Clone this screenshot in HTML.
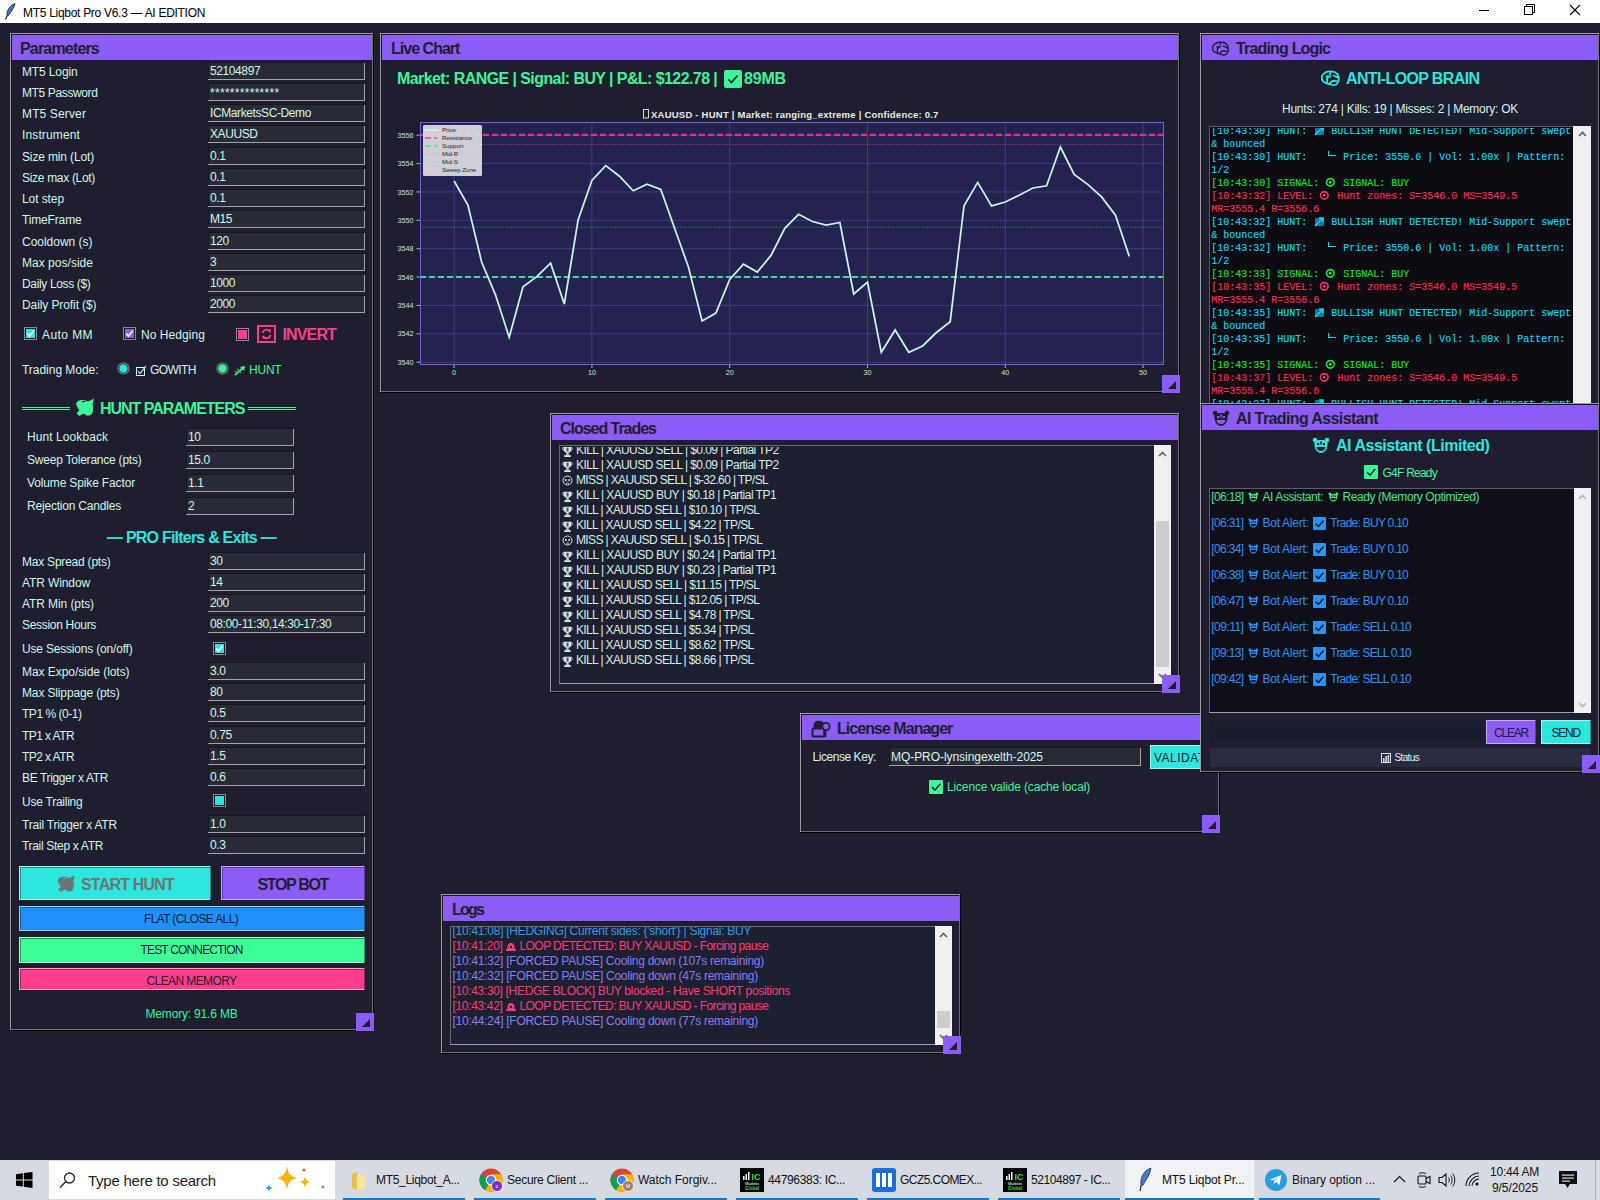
<!DOCTYPE html><html><head><meta charset="utf-8"><style>
html,body{margin:0;padding:0;}
body{width:1600px;height:1200px;position:relative;overflow:hidden;background:#1e1e2e;font-family:"Liberation Sans", sans-serif;}
.t{position:absolute;white-space:pre;}
.b{position:absolute;}
</style></head><body>
<div class="b" style="left:0px;top:0px;width:1600px;height:23px;background:#ffffff;"></div>
<div class="t" style="left:23px;top:6px;font-size:12px;line-height:14px;color:#000;letter-spacing:-0.292px;">MT5 Liqbot Pro V6.3 — AI EDITION</div>
<svg class="b" style="left:4px;top:3px" width="12" height="17"><path d="M11 0.5 C5 3 2.5 8 3 13 L4.5 12.5 C7 9 10 5 11 0.5 Z" fill="#4a78c8" stroke="#1a2a48" stroke-width="0.9"/><path d="M3 13 L1.5 16.5" stroke="#111" stroke-width="1.1"/></svg>
<svg class="b" style="left:1470px;top:0px" width="130" height="23"><path d="M9 10.5 L19 10.5" stroke="#000" stroke-width="1"/><rect x="54.5" y="6.5" width="8" height="8" fill="none" stroke="#000" stroke-width="1"/><path d="M56.5 6.5 L56.5 4.5 L64.5 4.5 L64.5 12.5 L62.5 12.5" fill="none" stroke="#000" stroke-width="1"/><path d="M100 5 L110 15 M110 5 L100 15" stroke="#000" stroke-width="1.1"/></svg>
<div class="b" style="left:10px;top:33px;width:364px;height:998px;background:#1e1e2e;"></div>
<div class="b" style="left:10px;top:33px;width:364px;height:1px;background:#9a9aa2;"></div>
<div class="b" style="left:10px;top:33px;width:1px;height:998px;background:#9a9aa2;"></div>
<div class="b" style="left:11px;top:34px;width:362px;height:1px;background:#18181f;"></div>
<div class="b" style="left:11px;top:34px;width:1px;height:996px;background:#18181f;"></div>
<div class="b" style="left:372px;top:34px;width:1px;height:996px;background:#6f6f78;"></div>
<div class="b" style="left:11px;top:1029px;width:362px;height:1px;background:#6f6f78;"></div>
<div class="b" style="left:373px;top:33px;width:1px;height:998px;background:#000;"></div>
<div class="b" style="left:10px;top:1030px;width:364px;height:1px;background:#000;"></div>
<div class="b" style="left:12px;top:35px;width:360px;height:25px;background:#8b5cf6;"></div>
<div class="t" style="left:20px;top:40px;font-size:16px;line-height:17px;color:#1e1e2e;font-weight:bold;letter-spacing:-0.823px;">Parameters</div>
<div class="t" style="left:22px;top:65px;font-size:12px;line-height:14px;color:#d2f6ea;letter-spacing:-0.132px;">MT5 Login</div>
<div class="b" style="left:208px;top:62px;width:157px;height:18px;background:#282a35;"></div>
<div class="b" style="left:208px;top:62px;width:157px;height:1px;background:#16161d;"></div>
<div class="b" style="left:208px;top:62px;width:1px;height:18px;background:#16161d;"></div>
<div class="b" style="left:208px;top:79px;width:157px;height:1px;background:#a3a3a8;"></div>
<div class="b" style="left:364px;top:63px;width:1px;height:17px;background:#a3a3a8;"></div>
<div class="t" style="left:210px;top:64px;font-size:12px;line-height:14px;color:#d2f6ea;letter-spacing:-0.4px;">52104897</div>
<div class="t" style="left:22px;top:86px;font-size:12px;line-height:14px;color:#d2f6ea;letter-spacing:-0.376px;">MT5 Password</div>
<div class="b" style="left:208px;top:83px;width:157px;height:18px;background:#282a35;"></div>
<div class="b" style="left:208px;top:83px;width:157px;height:1px;background:#16161d;"></div>
<div class="b" style="left:208px;top:83px;width:1px;height:18px;background:#16161d;"></div>
<div class="b" style="left:208px;top:100px;width:157px;height:1px;background:#a3a3a8;"></div>
<div class="b" style="left:364px;top:84px;width:1px;height:17px;background:#a3a3a8;"></div>
<div class="t" style="left:22px;top:107px;font-size:12px;line-height:14px;color:#d2f6ea;letter-spacing:0.133px;">MT5 Server</div>
<div class="b" style="left:208px;top:104px;width:157px;height:18px;background:#282a35;"></div>
<div class="b" style="left:208px;top:104px;width:157px;height:1px;background:#16161d;"></div>
<div class="b" style="left:208px;top:104px;width:1px;height:18px;background:#16161d;"></div>
<div class="b" style="left:208px;top:121px;width:157px;height:1px;background:#a3a3a8;"></div>
<div class="b" style="left:364px;top:105px;width:1px;height:17px;background:#a3a3a8;"></div>
<div class="t" style="left:210px;top:106px;font-size:12px;line-height:14px;color:#d2f6ea;letter-spacing:-0.4px;">ICMarketsSC-Demo</div>
<div class="t" style="left:22px;top:128px;font-size:12px;line-height:14px;color:#d2f6ea;letter-spacing:0.133px;">Instrument</div>
<div class="b" style="left:208px;top:125px;width:157px;height:18px;background:#282a35;"></div>
<div class="b" style="left:208px;top:125px;width:157px;height:1px;background:#16161d;"></div>
<div class="b" style="left:208px;top:125px;width:1px;height:18px;background:#16161d;"></div>
<div class="b" style="left:208px;top:142px;width:157px;height:1px;background:#a3a3a8;"></div>
<div class="b" style="left:364px;top:126px;width:1px;height:17px;background:#a3a3a8;"></div>
<div class="t" style="left:210px;top:127px;font-size:12px;line-height:14px;color:#d2f6ea;letter-spacing:-0.4px;">XAUUSD</div>
<div class="t" style="left:22px;top:150px;font-size:12px;line-height:14px;color:#d2f6ea;letter-spacing:-0.144px;">Size min (Lot)</div>
<div class="b" style="left:208px;top:147px;width:157px;height:18px;background:#282a35;"></div>
<div class="b" style="left:208px;top:147px;width:157px;height:1px;background:#16161d;"></div>
<div class="b" style="left:208px;top:147px;width:1px;height:18px;background:#16161d;"></div>
<div class="b" style="left:208px;top:164px;width:157px;height:1px;background:#a3a3a8;"></div>
<div class="b" style="left:364px;top:148px;width:1px;height:17px;background:#a3a3a8;"></div>
<div class="t" style="left:210px;top:149px;font-size:12px;line-height:14px;color:#d2f6ea;letter-spacing:-0.4px;">0.1</div>
<div class="t" style="left:22px;top:171px;font-size:12px;line-height:14px;color:#d2f6ea;letter-spacing:-0.31px;">Size max (Lot)</div>
<div class="b" style="left:208px;top:168px;width:157px;height:18px;background:#282a35;"></div>
<div class="b" style="left:208px;top:168px;width:157px;height:1px;background:#16161d;"></div>
<div class="b" style="left:208px;top:168px;width:1px;height:18px;background:#16161d;"></div>
<div class="b" style="left:208px;top:185px;width:157px;height:1px;background:#a3a3a8;"></div>
<div class="b" style="left:364px;top:169px;width:1px;height:17px;background:#a3a3a8;"></div>
<div class="t" style="left:210px;top:170px;font-size:12px;line-height:14px;color:#d2f6ea;letter-spacing:-0.4px;">0.1</div>
<div class="t" style="left:22px;top:192px;font-size:12px;line-height:14px;color:#d2f6ea;letter-spacing:-0.084px;">Lot step</div>
<div class="b" style="left:208px;top:189px;width:157px;height:18px;background:#282a35;"></div>
<div class="b" style="left:208px;top:189px;width:157px;height:1px;background:#16161d;"></div>
<div class="b" style="left:208px;top:189px;width:1px;height:18px;background:#16161d;"></div>
<div class="b" style="left:208px;top:206px;width:157px;height:1px;background:#a3a3a8;"></div>
<div class="b" style="left:364px;top:190px;width:1px;height:17px;background:#a3a3a8;"></div>
<div class="t" style="left:210px;top:191px;font-size:12px;line-height:14px;color:#d2f6ea;letter-spacing:-0.4px;">0.1</div>
<div class="t" style="left:22px;top:213px;font-size:12px;line-height:14px;color:#d2f6ea;letter-spacing:-0.156px;">TimeFrame</div>
<div class="b" style="left:208px;top:210px;width:157px;height:18px;background:#282a35;"></div>
<div class="b" style="left:208px;top:210px;width:157px;height:1px;background:#16161d;"></div>
<div class="b" style="left:208px;top:210px;width:1px;height:18px;background:#16161d;"></div>
<div class="b" style="left:208px;top:227px;width:157px;height:1px;background:#a3a3a8;"></div>
<div class="b" style="left:364px;top:211px;width:1px;height:17px;background:#a3a3a8;"></div>
<div class="t" style="left:210px;top:212px;font-size:12px;line-height:14px;color:#d2f6ea;letter-spacing:-0.4px;">M15</div>
<div class="t" style="left:22px;top:235px;font-size:12px;line-height:14px;color:#d2f6ea;letter-spacing:-0.017px;">Cooldown (s)</div>
<div class="b" style="left:208px;top:232px;width:157px;height:18px;background:#282a35;"></div>
<div class="b" style="left:208px;top:232px;width:157px;height:1px;background:#16161d;"></div>
<div class="b" style="left:208px;top:232px;width:1px;height:18px;background:#16161d;"></div>
<div class="b" style="left:208px;top:249px;width:157px;height:1px;background:#a3a3a8;"></div>
<div class="b" style="left:364px;top:233px;width:1px;height:17px;background:#a3a3a8;"></div>
<div class="t" style="left:210px;top:234px;font-size:12px;line-height:14px;color:#d2f6ea;letter-spacing:-0.4px;">120</div>
<div class="t" style="left:22px;top:256px;font-size:12px;line-height:14px;color:#d2f6ea;letter-spacing:0.026px;">Max pos/side</div>
<div class="b" style="left:208px;top:253px;width:157px;height:18px;background:#282a35;"></div>
<div class="b" style="left:208px;top:253px;width:157px;height:1px;background:#16161d;"></div>
<div class="b" style="left:208px;top:253px;width:1px;height:18px;background:#16161d;"></div>
<div class="b" style="left:208px;top:270px;width:157px;height:1px;background:#a3a3a8;"></div>
<div class="b" style="left:364px;top:254px;width:1px;height:17px;background:#a3a3a8;"></div>
<div class="t" style="left:210px;top:255px;font-size:12px;line-height:14px;color:#d2f6ea;letter-spacing:-0.4px;">3</div>
<div class="t" style="left:22px;top:277px;font-size:12px;line-height:14px;color:#d2f6ea;letter-spacing:-0.347px;">Daily Loss ($)</div>
<div class="b" style="left:208px;top:274px;width:157px;height:18px;background:#282a35;"></div>
<div class="b" style="left:208px;top:274px;width:157px;height:1px;background:#16161d;"></div>
<div class="b" style="left:208px;top:274px;width:1px;height:18px;background:#16161d;"></div>
<div class="b" style="left:208px;top:291px;width:157px;height:1px;background:#a3a3a8;"></div>
<div class="b" style="left:364px;top:275px;width:1px;height:17px;background:#a3a3a8;"></div>
<div class="t" style="left:210px;top:276px;font-size:12px;line-height:14px;color:#d2f6ea;letter-spacing:-0.4px;">1000</div>
<div class="t" style="left:22px;top:298px;font-size:12px;line-height:14px;color:#d2f6ea;letter-spacing:-0.095px;">Daily Profit ($)</div>
<div class="b" style="left:208px;top:295px;width:157px;height:18px;background:#282a35;"></div>
<div class="b" style="left:208px;top:295px;width:157px;height:1px;background:#16161d;"></div>
<div class="b" style="left:208px;top:295px;width:1px;height:18px;background:#16161d;"></div>
<div class="b" style="left:208px;top:312px;width:157px;height:1px;background:#a3a3a8;"></div>
<div class="b" style="left:364px;top:296px;width:1px;height:17px;background:#a3a3a8;"></div>
<div class="t" style="left:210px;top:297px;font-size:12px;line-height:14px;color:#d2f6ea;letter-spacing:-0.4px;">2000</div>
<div class="t" style="left:210px;top:86px;font-size:12px;line-height:14px;color:#d2f6ea;letter-spacing:0.292px;">**************</div>
<svg class="b" style="left:24px;top:327px" width="13" height="13"><rect x="0.5" y="0.5" width="12" height="12" fill="#1a1a24" stroke="#8a8a90"/><rect x="2" y="2" width="9" height="9" fill="#2ee6de"/><path d="M3.2 6.5 L5.5 9 L9.8 3.8" stroke="#e8fff8" stroke-width="1.7" fill="none"/></svg>
<div class="t" style="left:42px;top:328px;font-size:12px;line-height:14px;color:#d2f6ea;letter-spacing:0.429px;">Auto MM</div>
<svg class="b" style="left:123px;top:327px" width="13" height="13"><rect x="0.5" y="0.5" width="12" height="12" fill="#1a1a24" stroke="#8a8a90"/><rect x="2" y="2" width="9" height="9" fill="#8b5cf6"/><path d="M3.2 6.5 L5.5 9 L9.8 3.8" stroke="#e8fff8" stroke-width="1.7" fill="none"/></svg>
<div class="t" style="left:141px;top:328px;font-size:12px;line-height:14px;color:#d2f6ea;letter-spacing:0.062px;">No Hedging</div>
<svg class="b" style="left:236px;top:328px" width="13" height="13"><rect x="0.5" y="0.5" width="12" height="12" fill="#1a1a24" stroke="#8a8a90"/><rect x="2" y="2" width="9" height="9" fill="#ff3d8b"/></svg>
<svg class="b" style="left:257px;top:325px" width="19" height="18"><rect x="1" y="1" width="17" height="16" fill="none" stroke="#ff3d8b" stroke-width="2"/><path d="M5.5 8 A4 4 0 0 1 13 7" stroke="#ff3d8b" stroke-width="1.8" fill="none"/><path d="M13.5 10 A4 4 0 0 1 6 11" stroke="#ff3d8b" stroke-width="1.8" fill="none"/><path d="M11 5.5 L14 7.5 L13.5 4" fill="#ff3d8b"/><path d="M8 12.5 L5 10.5 L5.5 14" fill="#ff3d8b"/></svg>
<div class="t" style="left:282.5px;top:326px;font-size:16px;line-height:17px;color:#ff3d8b;font-weight:bold;letter-spacing:-0.867px;">INVERT</div>
<div class="t" style="left:22px;top:363px;font-size:12px;line-height:14px;color:#d2f6ea;letter-spacing:-0.032px;">Trading Mode:</div>
<svg class="b" style="left:117px;top:362px" width="13" height="13"><circle cx="6.5" cy="6.5" r="6" fill="#8a8a90"/><circle cx="6.5" cy="6.5" r="5" fill="#1a1a24"/><circle cx="6.5" cy="6.5" r="4.2" fill="#2ee6de"/></svg>
<svg class="b" style="left:136px;top:365px" width="11" height="11"><rect x="0.5" y="2.5" width="8" height="8" fill="none" stroke="#d2f6ea" stroke-width="1"/><path d="M2 6 L4 8.5 L10 1" stroke="#d2f6ea" stroke-width="1.2" fill="none"/></svg>
<div class="t" style="left:150px;top:363px;font-size:12px;line-height:14px;color:#d2f6ea;letter-spacing:-0.594px;">GOWITH</div>
<svg class="b" style="left:216px;top:362px" width="13" height="13"><circle cx="6.5" cy="6.5" r="6" fill="#8a8a90"/><circle cx="6.5" cy="6.5" r="5" fill="#1a1a24"/><circle cx="6.5" cy="6.5" r="4.2" fill="#3ef59a"/></svg>
<svg class="b" style="left:234px;top:365px" width="12" height="11"><path d="M1 10 L10 2" stroke="#3ef59a" stroke-width="2"/><path d="M6 2 L11 1 L10 6 Z" fill="#3ef59a"/><path d="M1 6 L4 9 M3 4 L7 8" stroke="#2aa86a" stroke-width="1.5"/></svg>
<div class="t" style="left:249px;top:363px;font-size:12px;line-height:14px;color:#3ef59a;letter-spacing:-0.211px;">HUNT</div>
<div class="b" style="left:22px;top:407px;width:48px;height:1px;background:#3ef59a;"></div>
<div class="b" style="left:22px;top:409px;width:48px;height:1px;background:#3ef59a;"></div>
<div class="b" style="left:248px;top:407px;width:48px;height:1px;background:#3ef59a;"></div>
<div class="b" style="left:248px;top:409px;width:48px;height:1px;background:#3ef59a;"></div>
<svg class="b" style="left:70px;top:394px" width="26.0" height="24.0" viewBox="0 0 26 24"><path d="M6 10 C6.5 7.5 9 6 12 6 C14 6 16 6.5 17.5 7.5 L24 4.8 L22.5 10.5 C23.5 13 23.5 17 22 19.5 C20.5 21.5 18.5 22 17 21.5 L13.5 19.5 L9.5 22 L6.5 19.5 L9.5 16 L8 14.5 Z" fill="#3ef59a"/><ellipse cx="13.5" cy="7.6" rx="2" ry="0.6" fill="#1e1e2e"/></svg>
<div class="t" style="left:100px;top:400px;font-size:16px;line-height:17px;color:#3ef59a;font-weight:bold;letter-spacing:-1.019px;">HUNT PARAMETERS</div>
<div class="t" style="left:27px;top:430px;font-size:12px;line-height:14px;color:#d2f6ea;letter-spacing:0.075px;">Hunt Lookback</div>
<div class="b" style="left:186px;top:428px;width:108px;height:18px;background:#282a35;"></div>
<div class="b" style="left:186px;top:428px;width:108px;height:1px;background:#16161d;"></div>
<div class="b" style="left:186px;top:428px;width:1px;height:18px;background:#16161d;"></div>
<div class="b" style="left:186px;top:445px;width:108px;height:1px;background:#a3a3a8;"></div>
<div class="b" style="left:293px;top:429px;width:1px;height:17px;background:#a3a3a8;"></div>
<div class="t" style="left:188px;top:430px;font-size:12px;line-height:14px;color:#d2f6ea;letter-spacing:-0.4px;">10</div>
<div class="t" style="left:27px;top:453px;font-size:12px;line-height:14px;color:#d2f6ea;letter-spacing:-0.222px;">Sweep Tolerance (pts)</div>
<div class="b" style="left:186px;top:451px;width:108px;height:18px;background:#282a35;"></div>
<div class="b" style="left:186px;top:451px;width:108px;height:1px;background:#16161d;"></div>
<div class="b" style="left:186px;top:451px;width:1px;height:18px;background:#16161d;"></div>
<div class="b" style="left:186px;top:468px;width:108px;height:1px;background:#a3a3a8;"></div>
<div class="b" style="left:293px;top:452px;width:1px;height:17px;background:#a3a3a8;"></div>
<div class="t" style="left:188px;top:453px;font-size:12px;line-height:14px;color:#d2f6ea;letter-spacing:-0.4px;">15.0</div>
<div class="t" style="left:27px;top:476px;font-size:12px;line-height:14px;color:#d2f6ea;letter-spacing:-0.142px;">Volume Spike Factor</div>
<div class="b" style="left:186px;top:474px;width:108px;height:18px;background:#282a35;"></div>
<div class="b" style="left:186px;top:474px;width:108px;height:1px;background:#16161d;"></div>
<div class="b" style="left:186px;top:474px;width:1px;height:18px;background:#16161d;"></div>
<div class="b" style="left:186px;top:491px;width:108px;height:1px;background:#a3a3a8;"></div>
<div class="b" style="left:293px;top:475px;width:1px;height:17px;background:#a3a3a8;"></div>
<div class="t" style="left:188px;top:476px;font-size:12px;line-height:14px;color:#d2f6ea;letter-spacing:-0.4px;">1.1</div>
<div class="t" style="left:27px;top:499px;font-size:12px;line-height:14px;color:#d2f6ea;letter-spacing:-0.199px;">Rejection Candles</div>
<div class="b" style="left:186px;top:497px;width:108px;height:18px;background:#282a35;"></div>
<div class="b" style="left:186px;top:497px;width:108px;height:1px;background:#16161d;"></div>
<div class="b" style="left:186px;top:497px;width:1px;height:18px;background:#16161d;"></div>
<div class="b" style="left:186px;top:514px;width:108px;height:1px;background:#a3a3a8;"></div>
<div class="b" style="left:293px;top:498px;width:1px;height:17px;background:#a3a3a8;"></div>
<div class="t" style="left:188px;top:499px;font-size:12px;line-height:14px;color:#d2f6ea;letter-spacing:-0.4px;">2</div>
<div class="t" style="left:107px;top:529px;font-size:16px;line-height:17px;color:#2ee6de;font-weight:bold;letter-spacing:-0.776px;">— PRO Filters &amp; Exits —</div>
<div class="t" style="left:22px;top:555px;font-size:12px;line-height:14px;color:#d2f6ea;letter-spacing:-0.22px;">Max Spread (pts)</div>
<div class="b" style="left:208px;top:552px;width:157px;height:18px;background:#282a35;"></div>
<div class="b" style="left:208px;top:552px;width:157px;height:1px;background:#16161d;"></div>
<div class="b" style="left:208px;top:552px;width:1px;height:18px;background:#16161d;"></div>
<div class="b" style="left:208px;top:569px;width:157px;height:1px;background:#a3a3a8;"></div>
<div class="b" style="left:364px;top:553px;width:1px;height:17px;background:#a3a3a8;"></div>
<div class="t" style="left:210px;top:554px;font-size:12px;line-height:14px;color:#d2f6ea;letter-spacing:-0.4px;">30</div>
<div class="t" style="left:22px;top:576px;font-size:12px;line-height:14px;color:#d2f6ea;letter-spacing:-0.113px;">ATR Window</div>
<div class="b" style="left:208px;top:573px;width:157px;height:18px;background:#282a35;"></div>
<div class="b" style="left:208px;top:573px;width:157px;height:1px;background:#16161d;"></div>
<div class="b" style="left:208px;top:573px;width:1px;height:18px;background:#16161d;"></div>
<div class="b" style="left:208px;top:590px;width:157px;height:1px;background:#a3a3a8;"></div>
<div class="b" style="left:364px;top:574px;width:1px;height:17px;background:#a3a3a8;"></div>
<div class="t" style="left:210px;top:575px;font-size:12px;line-height:14px;color:#d2f6ea;letter-spacing:-0.4px;">14</div>
<div class="t" style="left:22px;top:597px;font-size:12px;line-height:14px;color:#d2f6ea;letter-spacing:-0.085px;">ATR Min (pts)</div>
<div class="b" style="left:208px;top:594px;width:157px;height:18px;background:#282a35;"></div>
<div class="b" style="left:208px;top:594px;width:157px;height:1px;background:#16161d;"></div>
<div class="b" style="left:208px;top:594px;width:1px;height:18px;background:#16161d;"></div>
<div class="b" style="left:208px;top:611px;width:157px;height:1px;background:#a3a3a8;"></div>
<div class="b" style="left:364px;top:595px;width:1px;height:17px;background:#a3a3a8;"></div>
<div class="t" style="left:210px;top:596px;font-size:12px;line-height:14px;color:#d2f6ea;letter-spacing:-0.4px;">200</div>
<div class="t" style="left:22px;top:618px;font-size:12px;line-height:14px;color:#d2f6ea;letter-spacing:-0.31px;">Session Hours</div>
<div class="b" style="left:208px;top:615px;width:157px;height:18px;background:#282a35;"></div>
<div class="b" style="left:208px;top:615px;width:157px;height:1px;background:#16161d;"></div>
<div class="b" style="left:208px;top:615px;width:1px;height:18px;background:#16161d;"></div>
<div class="b" style="left:208px;top:632px;width:157px;height:1px;background:#a3a3a8;"></div>
<div class="b" style="left:364px;top:616px;width:1px;height:17px;background:#a3a3a8;"></div>
<div class="t" style="left:210px;top:617px;font-size:12px;line-height:14px;color:#d2f6ea;letter-spacing:-0.4px;">08:00-11:30,14:30-17:30</div>
<div class="t" style="left:22px;top:665px;font-size:12px;line-height:14px;color:#d2f6ea;letter-spacing:-0.059px;">Max Expo/side (lots)</div>
<div class="b" style="left:208px;top:662px;width:157px;height:18px;background:#282a35;"></div>
<div class="b" style="left:208px;top:662px;width:157px;height:1px;background:#16161d;"></div>
<div class="b" style="left:208px;top:662px;width:1px;height:18px;background:#16161d;"></div>
<div class="b" style="left:208px;top:679px;width:157px;height:1px;background:#a3a3a8;"></div>
<div class="b" style="left:364px;top:663px;width:1px;height:17px;background:#a3a3a8;"></div>
<div class="t" style="left:210px;top:664px;font-size:12px;line-height:14px;color:#d2f6ea;letter-spacing:-0.4px;">3.0</div>
<div class="t" style="left:22px;top:686px;font-size:12px;line-height:14px;color:#d2f6ea;letter-spacing:-0.141px;">Max Slippage (pts)</div>
<div class="b" style="left:208px;top:683px;width:157px;height:18px;background:#282a35;"></div>
<div class="b" style="left:208px;top:683px;width:157px;height:1px;background:#16161d;"></div>
<div class="b" style="left:208px;top:683px;width:1px;height:18px;background:#16161d;"></div>
<div class="b" style="left:208px;top:700px;width:157px;height:1px;background:#a3a3a8;"></div>
<div class="b" style="left:364px;top:684px;width:1px;height:17px;background:#a3a3a8;"></div>
<div class="t" style="left:210px;top:685px;font-size:12px;line-height:14px;color:#d2f6ea;letter-spacing:-0.4px;">80</div>
<div class="t" style="left:22px;top:707px;font-size:12px;line-height:14px;color:#d2f6ea;letter-spacing:-0.47px;">TP1 % (0-1)</div>
<div class="b" style="left:208px;top:704px;width:157px;height:18px;background:#282a35;"></div>
<div class="b" style="left:208px;top:704px;width:157px;height:1px;background:#16161d;"></div>
<div class="b" style="left:208px;top:704px;width:1px;height:18px;background:#16161d;"></div>
<div class="b" style="left:208px;top:721px;width:157px;height:1px;background:#a3a3a8;"></div>
<div class="b" style="left:364px;top:705px;width:1px;height:17px;background:#a3a3a8;"></div>
<div class="t" style="left:210px;top:706px;font-size:12px;line-height:14px;color:#d2f6ea;letter-spacing:-0.4px;">0.5</div>
<div class="t" style="left:22px;top:729px;font-size:12px;line-height:14px;color:#d2f6ea;letter-spacing:-0.568px;">TP1 x ATR</div>
<div class="b" style="left:208px;top:726px;width:157px;height:18px;background:#282a35;"></div>
<div class="b" style="left:208px;top:726px;width:157px;height:1px;background:#16161d;"></div>
<div class="b" style="left:208px;top:726px;width:1px;height:18px;background:#16161d;"></div>
<div class="b" style="left:208px;top:743px;width:157px;height:1px;background:#a3a3a8;"></div>
<div class="b" style="left:364px;top:727px;width:1px;height:17px;background:#a3a3a8;"></div>
<div class="t" style="left:210px;top:728px;font-size:12px;line-height:14px;color:#d2f6ea;letter-spacing:-0.4px;">0.75</div>
<div class="t" style="left:22px;top:750px;font-size:12px;line-height:14px;color:#d2f6ea;letter-spacing:-0.568px;">TP2 x ATR</div>
<div class="b" style="left:208px;top:747px;width:157px;height:18px;background:#282a35;"></div>
<div class="b" style="left:208px;top:747px;width:157px;height:1px;background:#16161d;"></div>
<div class="b" style="left:208px;top:747px;width:1px;height:18px;background:#16161d;"></div>
<div class="b" style="left:208px;top:764px;width:157px;height:1px;background:#a3a3a8;"></div>
<div class="b" style="left:364px;top:748px;width:1px;height:17px;background:#a3a3a8;"></div>
<div class="t" style="left:210px;top:749px;font-size:12px;line-height:14px;color:#d2f6ea;letter-spacing:-0.4px;">1.5</div>
<div class="t" style="left:22px;top:771px;font-size:12px;line-height:14px;color:#d2f6ea;letter-spacing:-0.362px;">BE Trigger x ATR</div>
<div class="b" style="left:208px;top:768px;width:157px;height:18px;background:#282a35;"></div>
<div class="b" style="left:208px;top:768px;width:157px;height:1px;background:#16161d;"></div>
<div class="b" style="left:208px;top:768px;width:1px;height:18px;background:#16161d;"></div>
<div class="b" style="left:208px;top:785px;width:157px;height:1px;background:#a3a3a8;"></div>
<div class="b" style="left:364px;top:769px;width:1px;height:17px;background:#a3a3a8;"></div>
<div class="t" style="left:210px;top:770px;font-size:12px;line-height:14px;color:#d2f6ea;letter-spacing:-0.4px;">0.6</div>
<div class="t" style="left:22px;top:818px;font-size:12px;line-height:14px;color:#d2f6ea;letter-spacing:-0.195px;">Trail Trigger x ATR</div>
<div class="b" style="left:208px;top:815px;width:157px;height:18px;background:#282a35;"></div>
<div class="b" style="left:208px;top:815px;width:157px;height:1px;background:#16161d;"></div>
<div class="b" style="left:208px;top:815px;width:1px;height:18px;background:#16161d;"></div>
<div class="b" style="left:208px;top:832px;width:157px;height:1px;background:#a3a3a8;"></div>
<div class="b" style="left:364px;top:816px;width:1px;height:17px;background:#a3a3a8;"></div>
<div class="t" style="left:210px;top:817px;font-size:12px;line-height:14px;color:#d2f6ea;letter-spacing:-0.4px;">1.0</div>
<div class="t" style="left:22px;top:839px;font-size:12px;line-height:14px;color:#d2f6ea;letter-spacing:-0.313px;">Trail Step x ATR</div>
<div class="b" style="left:208px;top:836px;width:157px;height:18px;background:#282a35;"></div>
<div class="b" style="left:208px;top:836px;width:157px;height:1px;background:#16161d;"></div>
<div class="b" style="left:208px;top:836px;width:1px;height:18px;background:#16161d;"></div>
<div class="b" style="left:208px;top:853px;width:157px;height:1px;background:#a3a3a8;"></div>
<div class="b" style="left:364px;top:837px;width:1px;height:17px;background:#a3a3a8;"></div>
<div class="t" style="left:210px;top:838px;font-size:12px;line-height:14px;color:#d2f6ea;letter-spacing:-0.4px;">0.3</div>
<div class="t" style="left:22px;top:642px;font-size:12px;line-height:14px;color:#d2f6ea;letter-spacing:-0.189px;">Use Sessions (on/off)</div>
<svg class="b" style="left:213px;top:642px" width="13" height="13"><rect x="0.5" y="0.5" width="12" height="12" fill="#1a1a24" stroke="#8a8a90"/><rect x="2" y="2" width="9" height="9" fill="#2ee6de"/><path d="M3.2 6.5 L5.5 9 L9.8 3.8" stroke="#e8fff8" stroke-width="1.7" fill="none"/></svg>
<div class="t" style="left:22px;top:795px;font-size:12px;line-height:14px;color:#d2f6ea;letter-spacing:-0.24px;">Use Trailing</div>
<svg class="b" style="left:213px;top:794px" width="13" height="13"><rect x="0.5" y="0.5" width="12" height="12" fill="#1a1a24" stroke="#8a8a90"/><rect x="2" y="2" width="9" height="9" fill="#2ee6de"/></svg>
<div class="b" style="left:19px;top:866px;width:192px;height:34px;background:#2ee6de;"></div>
<div class="b" style="left:19px;top:866px;width:192px;height:1px;background:#9ff7f2;"></div>
<div class="b" style="left:19px;top:866px;width:1px;height:34px;background:#9ff7f2;"></div>
<div class="b" style="left:20px;top:867px;width:190px;height:1px;background:#1a8f8a;"></div>
<div class="b" style="left:20px;top:867px;width:1px;height:32px;background:#1a8f8a;"></div>
<div class="b" style="left:19px;top:899px;width:192px;height:1px;background:#9ff7f2;"></div>
<div class="b" style="left:210px;top:866px;width:1px;height:34px;background:#1a8f8a;"></div>
<svg class="b" style="left:52px;top:871px" width="24.7" height="22.8" viewBox="0 0 26 24"><path d="M6 10 C6.5 7.5 9 6 12 6 C14 6 16 6.5 17.5 7.5 L24 4.8 L22.5 10.5 C23.5 13 23.5 17 22 19.5 C20.5 21.5 18.5 22 17 21.5 L13.5 19.5 L9.5 22 L6.5 19.5 L9.5 16 L8 14.5 Z" fill="#6e7474"/><ellipse cx="13.5" cy="7.6" rx="2" ry="0.6" fill="#2ee6de"/></svg>
<div class="t" style="left:81px;top:876px;font-size:16px;line-height:17px;color:#6e7474;font-weight:bold;letter-spacing:-0.809px;">START HUNT</div>
<div class="b" style="left:221px;top:866px;width:144px;height:34px;background:#8b5cf6;"></div>
<div class="b" style="left:221px;top:866px;width:144px;height:1px;background:#c3a9ff;"></div>
<div class="b" style="left:221px;top:866px;width:1px;height:34px;background:#c3a9ff;"></div>
<div class="b" style="left:222px;top:867px;width:142px;height:1px;background:#5a3aa8;"></div>
<div class="b" style="left:222px;top:867px;width:1px;height:32px;background:#5a3aa8;"></div>
<div class="b" style="left:221px;top:899px;width:144px;height:1px;background:#c3a9ff;"></div>
<div class="b" style="left:364px;top:866px;width:1px;height:34px;background:#5a3aa8;"></div>
<div class="t" style="left:257.5px;top:876px;font-size:16px;line-height:17px;color:#1e1e2e;font-weight:bold;letter-spacing:-1.346px;">STOP BOT</div>
<div class="b" style="left:19px;top:906px;width:346px;height:25px;background:#1e90ff;"></div>
<div class="b" style="left:19px;top:906px;width:346px;height:1px;background:#9ccfff;"></div>
<div class="b" style="left:19px;top:906px;width:1px;height:25px;background:#9ccfff;"></div>
<div class="b" style="left:20px;top:907px;width:344px;height:1px;background:#145a9e;"></div>
<div class="b" style="left:20px;top:907px;width:1px;height:23px;background:#145a9e;"></div>
<div class="b" style="left:19px;top:930px;width:346px;height:1px;background:#9ccfff;"></div>
<div class="b" style="left:364px;top:906px;width:1px;height:25px;background:#145a9e;"></div>
<div class="t" style="left:144px;top:912px;font-size:12px;line-height:14px;color:#1e1e2e;letter-spacing:-0.64px;">FLAT (CLOSE ALL)</div>
<div class="b" style="left:19px;top:937px;width:346px;height:26px;background:#3dff98;"></div>
<div class="b" style="left:19px;top:937px;width:346px;height:1px;background:#a8ffd0;"></div>
<div class="b" style="left:19px;top:937px;width:1px;height:26px;background:#a8ffd0;"></div>
<div class="b" style="left:20px;top:938px;width:344px;height:1px;background:#22915a;"></div>
<div class="b" style="left:20px;top:938px;width:1px;height:24px;background:#22915a;"></div>
<div class="b" style="left:19px;top:962px;width:346px;height:1px;background:#a8ffd0;"></div>
<div class="b" style="left:364px;top:937px;width:1px;height:26px;background:#22915a;"></div>
<div class="t" style="left:140.5px;top:943px;font-size:12px;line-height:14px;color:#1e1e2e;letter-spacing:-0.829px;">TEST CONNECTION</div>
<div class="b" style="left:19px;top:968px;width:346px;height:22px;background:#ff3d8b;"></div>
<div class="b" style="left:19px;top:968px;width:346px;height:1px;background:#ff9cc4;"></div>
<div class="b" style="left:19px;top:968px;width:1px;height:22px;background:#ff9cc4;"></div>
<div class="b" style="left:20px;top:969px;width:344px;height:1px;background:#99255a;"></div>
<div class="b" style="left:20px;top:969px;width:1px;height:20px;background:#99255a;"></div>
<div class="b" style="left:19px;top:989px;width:346px;height:1px;background:#ff9cc4;"></div>
<div class="b" style="left:364px;top:968px;width:1px;height:22px;background:#99255a;"></div>
<div class="t" style="left:146.5px;top:974px;font-size:12px;line-height:14px;color:#1e1e2e;letter-spacing:-0.594px;">CLEAN MEMORY</div>
<div class="t" style="left:145.5px;top:1007px;font-size:12px;line-height:14px;color:#3ef59a;letter-spacing:-0.178px;">Memory: 91.6 MB</div>
<svg class="b" style="left:356px;top:1013px" width="18" height="18"><rect width="18" height="18" fill="#8b5cf6"/><path d="M6 14 L14 6 L14 14 Z" fill="#1e1e2e"/></svg>
<div class="b" style="left:380px;top:33px;width:800px;height:360px;background:#1e1e2e;"></div>
<div class="b" style="left:380px;top:33px;width:800px;height:1px;background:#9a9aa2;"></div>
<div class="b" style="left:380px;top:33px;width:1px;height:360px;background:#9a9aa2;"></div>
<div class="b" style="left:381px;top:34px;width:798px;height:1px;background:#18181f;"></div>
<div class="b" style="left:381px;top:34px;width:1px;height:358px;background:#18181f;"></div>
<div class="b" style="left:1178px;top:34px;width:1px;height:358px;background:#6f6f78;"></div>
<div class="b" style="left:381px;top:391px;width:798px;height:1px;background:#6f6f78;"></div>
<div class="b" style="left:1179px;top:33px;width:1px;height:360px;background:#000;"></div>
<div class="b" style="left:380px;top:392px;width:800px;height:1px;background:#000;"></div>
<div class="b" style="left:382px;top:35px;width:796px;height:25px;background:#8b5cf6;"></div>
<div class="t" style="left:391px;top:40px;font-size:16px;line-height:17px;color:#1e1e2e;font-weight:bold;letter-spacing:-0.981px;">Live Chart</div>
<div class="t" style="left:397px;top:70px;font-size:16px;line-height:17px;color:#3ef59a;font-weight:bold;letter-spacing:-0.578px;">Market: RANGE | Signal: BUY | P&amp;L: $122.78 |</div>
<svg class="b" style="left:724px;top:70px" width="18" height="18"><rect width="18" height="18" rx="2" fill="#3ef59a"/><path d="M4.5 9.5 L7.5 12.5 L13.5 5.5" stroke="#1e1e2e" stroke-width="1.6" fill="none"/></svg>
<div class="t" style="left:744px;top:70px;font-size:16px;line-height:17px;color:#3ef59a;font-weight:bold;letter-spacing:-0.176px;">89MB</div>
<svg class="b" style="left:0;top:0" width="1600" height="400"><rect x="420" y="122" width="744" height="243" fill="#24224e"/><line x1="420" y1="362.20" x2="1164" y2="362.20" stroke="#3f3a8c" stroke-width="1"/><line x1="416.5" y1="362.20" x2="420" y2="362.20" stroke="#c8e6dc" stroke-width="0.8"/><text x="413.5" y="364.80" font-size="7.2" fill="#c8e6dc" text-anchor="end" font-family="Liberation Sans">3540</text><line x1="420" y1="333.82" x2="1164" y2="333.82" stroke="#3f3a8c" stroke-width="1"/><line x1="416.5" y1="333.82" x2="420" y2="333.82" stroke="#c8e6dc" stroke-width="0.8"/><text x="413.5" y="336.43" font-size="7.2" fill="#c8e6dc" text-anchor="end" font-family="Liberation Sans">3542</text><line x1="420" y1="305.45" x2="1164" y2="305.45" stroke="#3f3a8c" stroke-width="1"/><line x1="416.5" y1="305.45" x2="420" y2="305.45" stroke="#c8e6dc" stroke-width="0.8"/><text x="413.5" y="308.05" font-size="7.2" fill="#c8e6dc" text-anchor="end" font-family="Liberation Sans">3544</text><line x1="420" y1="277.07" x2="1164" y2="277.07" stroke="#3f3a8c" stroke-width="1"/><line x1="416.5" y1="277.07" x2="420" y2="277.07" stroke="#c8e6dc" stroke-width="0.8"/><text x="413.5" y="279.68" font-size="7.2" fill="#c8e6dc" text-anchor="end" font-family="Liberation Sans">3546</text><line x1="420" y1="248.70" x2="1164" y2="248.70" stroke="#3f3a8c" stroke-width="1"/><line x1="416.5" y1="248.70" x2="420" y2="248.70" stroke="#c8e6dc" stroke-width="0.8"/><text x="413.5" y="251.30" font-size="7.2" fill="#c8e6dc" text-anchor="end" font-family="Liberation Sans">3548</text><line x1="420" y1="220.32" x2="1164" y2="220.32" stroke="#3f3a8c" stroke-width="1"/><line x1="416.5" y1="220.32" x2="420" y2="220.32" stroke="#c8e6dc" stroke-width="0.8"/><text x="413.5" y="222.92" font-size="7.2" fill="#c8e6dc" text-anchor="end" font-family="Liberation Sans">3550</text><line x1="420" y1="191.95" x2="1164" y2="191.95" stroke="#3f3a8c" stroke-width="1"/><line x1="416.5" y1="191.95" x2="420" y2="191.95" stroke="#c8e6dc" stroke-width="0.8"/><text x="413.5" y="194.55" font-size="7.2" fill="#c8e6dc" text-anchor="end" font-family="Liberation Sans">3552</text><line x1="420" y1="163.57" x2="1164" y2="163.57" stroke="#3f3a8c" stroke-width="1"/><line x1="416.5" y1="163.57" x2="420" y2="163.57" stroke="#c8e6dc" stroke-width="0.8"/><text x="413.5" y="166.17" font-size="7.2" fill="#c8e6dc" text-anchor="end" font-family="Liberation Sans">3554</text><line x1="420" y1="135.20" x2="1164" y2="135.20" stroke="#3f3a8c" stroke-width="1"/><line x1="416.5" y1="135.20" x2="420" y2="135.20" stroke="#c8e6dc" stroke-width="0.8"/><text x="413.5" y="137.80" font-size="7.2" fill="#c8e6dc" text-anchor="end" font-family="Liberation Sans">3556</text><line x1="454.10" y1="122" x2="454.10" y2="364" stroke="#3f3a8c" stroke-width="1"/><line x1="454.10" y1="365" x2="454.10" y2="368" stroke="#c8e6dc" stroke-width="0.8"/><text x="454.10" y="374.5" font-size="7.2" fill="#c8e6dc" text-anchor="middle" font-family="Liberation Sans">0</text><line x1="591.90" y1="122" x2="591.90" y2="364" stroke="#3f3a8c" stroke-width="1"/><line x1="591.90" y1="365" x2="591.90" y2="368" stroke="#c8e6dc" stroke-width="0.8"/><text x="591.90" y="374.5" font-size="7.2" fill="#c8e6dc" text-anchor="middle" font-family="Liberation Sans">10</text><line x1="729.70" y1="122" x2="729.70" y2="364" stroke="#3f3a8c" stroke-width="1"/><line x1="729.70" y1="365" x2="729.70" y2="368" stroke="#c8e6dc" stroke-width="0.8"/><text x="729.70" y="374.5" font-size="7.2" fill="#c8e6dc" text-anchor="middle" font-family="Liberation Sans">20</text><line x1="867.50" y1="122" x2="867.50" y2="364" stroke="#3f3a8c" stroke-width="1"/><line x1="867.50" y1="365" x2="867.50" y2="368" stroke="#c8e6dc" stroke-width="0.8"/><text x="867.50" y="374.5" font-size="7.2" fill="#c8e6dc" text-anchor="middle" font-family="Liberation Sans">30</text><line x1="1005.30" y1="122" x2="1005.30" y2="364" stroke="#3f3a8c" stroke-width="1"/><line x1="1005.30" y1="365" x2="1005.30" y2="368" stroke="#c8e6dc" stroke-width="0.8"/><text x="1005.30" y="374.5" font-size="7.2" fill="#c8e6dc" text-anchor="middle" font-family="Liberation Sans">40</text><line x1="1143.10" y1="122" x2="1143.10" y2="364" stroke="#3f3a8c" stroke-width="1"/><line x1="1143.10" y1="365" x2="1143.10" y2="368" stroke="#c8e6dc" stroke-width="0.8"/><text x="1143.10" y="374.5" font-size="7.2" fill="#c8e6dc" text-anchor="middle" font-family="Liberation Sans">50</text><line x1="420" y1="134.8" x2="1164" y2="134.8" stroke="#dc3581" stroke-width="2.2" stroke-dasharray="6 3"/><line x1="420" y1="144.5" x2="1164" y2="144.5" stroke="#b03a80" stroke-width="1" stroke-dasharray="1 1.6"/><line x1="420" y1="227.3" x2="1164" y2="227.3" stroke="#2f9d8a" stroke-width="1" stroke-dasharray="1 1.6"/><line x1="420" y1="277" x2="1164" y2="277" stroke="#3ddc97" stroke-width="2.2" stroke-dasharray="6 3"/><path d="M454.1 181.0 L467.9 205.0 L481.7 262.3 L495.4 294.6 L509.2 337.3 L523.0 286.7 L536.8 276.7 L550.6 263.1 L564.3 304.0 L578.1 220.0 L591.9 180.4 L605.7 165.6 L619.5 176.2 L633.2 190.8 L647.0 184.2 L660.8 189.4 L674.6 228.3 L688.4 266.9 L702.1 321.0 L715.9 313.1 L729.7 279.4 L743.5 264.2 L757.3 272.1 L771.0 255.4 L784.8 228.3 L798.6 214.3 L812.4 221.5 L826.2 225.2 L839.9 222.5 L853.7 294.0 L867.5 282.1 L881.3 352.3 L895.1 330.0 L908.8 352.3 L922.6 346.0 L936.4 332.5 L950.2 321.7 L964.0 205.7 L977.7 182.4 L991.5 205.9 L1005.3 202.0 L1019.1 195.2 L1032.9 188.0 L1046.6 185.8 L1060.4 147.0 L1074.2 174.5 L1088.0 184.6 L1101.8 197.2 L1115.5 215.1 L1129.3 256.4" stroke="#c9f7e6" stroke-width="1.75" fill="none" stroke-linejoin="miter"/><rect x="420.5" y="122.5" width="743" height="242" fill="none" stroke="#7b5ce0" stroke-width="1"/><rect x="423" y="125" width="59" height="51" rx="1.5" fill="#dcdce4" fill-opacity="0.93"/><line x1="424.5" y1="130" x2="438" y2="130" stroke="#c9f7e6" stroke-width="1.6"/><line x1="425" y1="138" x2="437" y2="138" stroke="#e8488a" stroke-width="1.6" stroke-dasharray="6 3"/><line x1="425" y1="146" x2="437" y2="146" stroke="#3ee88a" stroke-width="1.6" stroke-dasharray="6 3"/><line x1="425" y1="154.3" x2="437" y2="154.3" stroke="#e898c0" stroke-width="0.8" stroke-dasharray="1 1"/><line x1="425" y1="162.3" x2="437" y2="162.3" stroke="#98d8c0" stroke-width="0.8" stroke-dasharray="1 1"/><rect x="425" y="168.0" width="12" height="4.6" fill="#e0c6d8"/><text x="442" y="132.0" font-size="6.1" fill="#222" font-family="Liberation Sans">Price</text><text x="442" y="140.0" font-size="6.1" fill="#222" font-family="Liberation Sans">Resistance</text><text x="442" y="148.0" font-size="6.1" fill="#222" font-family="Liberation Sans">Support</text><text x="442" y="156.3" font-size="6.1" fill="#222" font-family="Liberation Sans">Mid-R</text><text x="442" y="164.3" font-size="6.1" fill="#222" font-family="Liberation Sans">Mid-S</text><text x="442" y="172.3" font-size="6.1" fill="#222" font-family="Liberation Sans">Sweep Zone</text></svg>
<svg class="b" style="left:643px;top:109px" width="7" height="10"><rect x="0.5" y="0.5" width="5" height="8.5" fill="none" stroke="#e8e8e8" stroke-width="0.9"/></svg>
<div class="t" style="left:651px;top:109px;font-size:9.5px;line-height:11px;color:#e6ece8;font-weight:bold;letter-spacing:0.229px;">XAUUSD - HUNT | Market: ranging_extreme | Confidence: 0.7</div>
<svg class="b" style="left:1162px;top:375px" width="18" height="18"><rect width="18" height="18" fill="#8b5cf6"/><path d="M6 14 L14 6 L14 14 Z" fill="#1e1e2e"/></svg>
<div class="b" style="left:550px;top:413px;width:630px;height:280px;background:#1e1e2e;"></div>
<div class="b" style="left:550px;top:413px;width:630px;height:1px;background:#9a9aa2;"></div>
<div class="b" style="left:550px;top:413px;width:1px;height:280px;background:#9a9aa2;"></div>
<div class="b" style="left:551px;top:414px;width:628px;height:1px;background:#18181f;"></div>
<div class="b" style="left:551px;top:414px;width:1px;height:278px;background:#18181f;"></div>
<div class="b" style="left:1178px;top:414px;width:1px;height:278px;background:#6f6f78;"></div>
<div class="b" style="left:551px;top:691px;width:628px;height:1px;background:#6f6f78;"></div>
<div class="b" style="left:1179px;top:413px;width:1px;height:280px;background:#000;"></div>
<div class="b" style="left:550px;top:692px;width:630px;height:1px;background:#000;"></div>
<div class="b" style="left:552px;top:415px;width:626px;height:25px;background:#8b5cf6;"></div>
<div class="t" style="left:560px;top:420px;font-size:16px;line-height:17px;color:#1e1e2e;font-weight:bold;letter-spacing:-1.037px;">Closed Trades</div>
<div class="b" style="left:559px;top:445px;width:612px;height:239px;background:#1c2030;"></div>
<div class="b" style="left:559px;top:445px;width:612px;height:1px;background:#6a6a74;"></div>
<div class="b" style="left:559px;top:445px;width:1px;height:239px;background:#6a6a74;"></div>
<div class="b" style="left:559px;top:683px;width:612px;height:1px;background:#a0a0a8;"></div>
<div class="b" style="left:560px;top:447px;width:594px;height:236px;overflow:hidden">
<svg class="b" style="left:2px;top:-1px" width="11" height="12"><path d="M1.8 0.8 H9.2 V3.5 C9.2 5.8 7.6 7 5.5 7 C3.4 7 1.8 5.8 1.8 3.5 Z" fill="#d6efe6"/><rect x="4.4" y="1.6" width="2.2" height="4" fill="#1c2030" fill-opacity="0.7"/><path d="M1.8 1.3 C0.2 1.3 0.3 4.2 2.2 4.6 M9.2 1.3 C10.8 1.3 10.7 4.2 8.8 4.6" stroke="#d6efe6" stroke-width="0.9" fill="none"/><path d="M4.6 7 L3.6 9.2 H7.4 L6.4 7 Z" fill="#d6efe6" fill-opacity="0.8"/><rect x="2.3" y="9.2" width="6.4" height="1.8" fill="#d6efe6"/></svg>
<div class="t" style="left:16px;top:-4px;font-size:12px;line-height:14px;color:#d6efe6;letter-spacing:-0.562px;">KILL | XAUUSD SELL | $0.09 | Partial TP2</div>
<svg class="b" style="left:2px;top:14px" width="11" height="12"><path d="M1.8 0.8 H9.2 V3.5 C9.2 5.8 7.6 7 5.5 7 C3.4 7 1.8 5.8 1.8 3.5 Z" fill="#d6efe6"/><rect x="4.4" y="1.6" width="2.2" height="4" fill="#1c2030" fill-opacity="0.7"/><path d="M1.8 1.3 C0.2 1.3 0.3 4.2 2.2 4.6 M9.2 1.3 C10.8 1.3 10.7 4.2 8.8 4.6" stroke="#d6efe6" stroke-width="0.9" fill="none"/><path d="M4.6 7 L3.6 9.2 H7.4 L6.4 7 Z" fill="#d6efe6" fill-opacity="0.8"/><rect x="2.3" y="9.2" width="6.4" height="1.8" fill="#d6efe6"/></svg>
<div class="t" style="left:16px;top:11px;font-size:12px;line-height:14px;color:#d6efe6;letter-spacing:-0.562px;">KILL | XAUUSD SELL | $0.09 | Partial TP2</div>
<svg class="b" style="left:2px;top:28px" width="11" height="11"><circle cx="5.5" cy="5.5" r="4.5" fill="none" stroke="#d6efe6" stroke-width="1"/><circle cx="3.8" cy="5" r="1" fill="#d6efe6"/><circle cx="7.2" cy="5" r="1" fill="#d6efe6"/><path d="M4 8 L7 8" stroke="#d6efe6" stroke-width="0.8"/></svg>
<div class="t" style="left:16px;top:26px;font-size:12px;line-height:14px;color:#d6efe6;letter-spacing:-0.631px;">MISS | XAUUSD SELL | $-32.60 | TP/SL</div>
<svg class="b" style="left:2px;top:44px" width="11" height="12"><path d="M1.8 0.8 H9.2 V3.5 C9.2 5.8 7.6 7 5.5 7 C3.4 7 1.8 5.8 1.8 3.5 Z" fill="#d6efe6"/><rect x="4.4" y="1.6" width="2.2" height="4" fill="#1c2030" fill-opacity="0.7"/><path d="M1.8 1.3 C0.2 1.3 0.3 4.2 2.2 4.6 M9.2 1.3 C10.8 1.3 10.7 4.2 8.8 4.6" stroke="#d6efe6" stroke-width="0.9" fill="none"/><path d="M4.6 7 L3.6 9.2 H7.4 L6.4 7 Z" fill="#d6efe6" fill-opacity="0.8"/><rect x="2.3" y="9.2" width="6.4" height="1.8" fill="#d6efe6"/></svg>
<div class="t" style="left:16px;top:41px;font-size:12px;line-height:14px;color:#d6efe6;letter-spacing:-0.526px;">KILL | XAUUSD BUY | $0.18 | Partial TP1</div>
<svg class="b" style="left:2px;top:59px" width="11" height="12"><path d="M1.8 0.8 H9.2 V3.5 C9.2 5.8 7.6 7 5.5 7 C3.4 7 1.8 5.8 1.8 3.5 Z" fill="#d6efe6"/><rect x="4.4" y="1.6" width="2.2" height="4" fill="#1c2030" fill-opacity="0.7"/><path d="M1.8 1.3 C0.2 1.3 0.3 4.2 2.2 4.6 M9.2 1.3 C10.8 1.3 10.7 4.2 8.8 4.6" stroke="#d6efe6" stroke-width="0.9" fill="none"/><path d="M4.6 7 L3.6 9.2 H7.4 L6.4 7 Z" fill="#d6efe6" fill-opacity="0.8"/><rect x="2.3" y="9.2" width="6.4" height="1.8" fill="#d6efe6"/></svg>
<div class="t" style="left:16px;top:56px;font-size:12px;line-height:14px;color:#d6efe6;letter-spacing:-0.639px;">KILL | XAUUSD SELL | $10.10 | TP/SL</div>
<svg class="b" style="left:2px;top:74px" width="11" height="12"><path d="M1.8 0.8 H9.2 V3.5 C9.2 5.8 7.6 7 5.5 7 C3.4 7 1.8 5.8 1.8 3.5 Z" fill="#d6efe6"/><rect x="4.4" y="1.6" width="2.2" height="4" fill="#1c2030" fill-opacity="0.7"/><path d="M1.8 1.3 C0.2 1.3 0.3 4.2 2.2 4.6 M9.2 1.3 C10.8 1.3 10.7 4.2 8.8 4.6" stroke="#d6efe6" stroke-width="0.9" fill="none"/><path d="M4.6 7 L3.6 9.2 H7.4 L6.4 7 Z" fill="#d6efe6" fill-opacity="0.8"/><rect x="2.3" y="9.2" width="6.4" height="1.8" fill="#d6efe6"/></svg>
<div class="t" style="left:16px;top:71px;font-size:12px;line-height:14px;color:#d6efe6;letter-spacing:-0.631px;">KILL | XAUUSD SELL | $4.22 | TP/SL</div>
<svg class="b" style="left:2px;top:88px" width="11" height="11"><circle cx="5.5" cy="5.5" r="4.5" fill="none" stroke="#d6efe6" stroke-width="1"/><circle cx="3.8" cy="5" r="1" fill="#d6efe6"/><circle cx="7.2" cy="5" r="1" fill="#d6efe6"/><path d="M4 8 L7 8" stroke="#d6efe6" stroke-width="0.8"/></svg>
<div class="t" style="left:16px;top:86px;font-size:12px;line-height:14px;color:#d6efe6;letter-spacing:-0.623px;">MISS | XAUUSD SELL | $-0.15 | TP/SL</div>
<svg class="b" style="left:2px;top:104px" width="11" height="12"><path d="M1.8 0.8 H9.2 V3.5 C9.2 5.8 7.6 7 5.5 7 C3.4 7 1.8 5.8 1.8 3.5 Z" fill="#d6efe6"/><rect x="4.4" y="1.6" width="2.2" height="4" fill="#1c2030" fill-opacity="0.7"/><path d="M1.8 1.3 C0.2 1.3 0.3 4.2 2.2 4.6 M9.2 1.3 C10.8 1.3 10.7 4.2 8.8 4.6" stroke="#d6efe6" stroke-width="0.9" fill="none"/><path d="M4.6 7 L3.6 9.2 H7.4 L6.4 7 Z" fill="#d6efe6" fill-opacity="0.8"/><rect x="2.3" y="9.2" width="6.4" height="1.8" fill="#d6efe6"/></svg>
<div class="t" style="left:16px;top:101px;font-size:12px;line-height:14px;color:#d6efe6;letter-spacing:-0.526px;">KILL | XAUUSD BUY | $0.24 | Partial TP1</div>
<svg class="b" style="left:2px;top:119px" width="11" height="12"><path d="M1.8 0.8 H9.2 V3.5 C9.2 5.8 7.6 7 5.5 7 C3.4 7 1.8 5.8 1.8 3.5 Z" fill="#d6efe6"/><rect x="4.4" y="1.6" width="2.2" height="4" fill="#1c2030" fill-opacity="0.7"/><path d="M1.8 1.3 C0.2 1.3 0.3 4.2 2.2 4.6 M9.2 1.3 C10.8 1.3 10.7 4.2 8.8 4.6" stroke="#d6efe6" stroke-width="0.9" fill="none"/><path d="M4.6 7 L3.6 9.2 H7.4 L6.4 7 Z" fill="#d6efe6" fill-opacity="0.8"/><rect x="2.3" y="9.2" width="6.4" height="1.8" fill="#d6efe6"/></svg>
<div class="t" style="left:16px;top:116px;font-size:12px;line-height:14px;color:#d6efe6;letter-spacing:-0.526px;">KILL | XAUUSD BUY | $0.23 | Partial TP1</div>
<svg class="b" style="left:2px;top:134px" width="11" height="12"><path d="M1.8 0.8 H9.2 V3.5 C9.2 5.8 7.6 7 5.5 7 C3.4 7 1.8 5.8 1.8 3.5 Z" fill="#d6efe6"/><rect x="4.4" y="1.6" width="2.2" height="4" fill="#1c2030" fill-opacity="0.7"/><path d="M1.8 1.3 C0.2 1.3 0.3 4.2 2.2 4.6 M9.2 1.3 C10.8 1.3 10.7 4.2 8.8 4.6" stroke="#d6efe6" stroke-width="0.9" fill="none"/><path d="M4.6 7 L3.6 9.2 H7.4 L6.4 7 Z" fill="#d6efe6" fill-opacity="0.8"/><rect x="2.3" y="9.2" width="6.4" height="1.8" fill="#d6efe6"/></svg>
<div class="t" style="left:16px;top:131px;font-size:12px;line-height:14px;color:#d6efe6;letter-spacing:-0.614px;">KILL | XAUUSD SELL | $11.15 | TP/SL</div>
<svg class="b" style="left:2px;top:149px" width="11" height="12"><path d="M1.8 0.8 H9.2 V3.5 C9.2 5.8 7.6 7 5.5 7 C3.4 7 1.8 5.8 1.8 3.5 Z" fill="#d6efe6"/><rect x="4.4" y="1.6" width="2.2" height="4" fill="#1c2030" fill-opacity="0.7"/><path d="M1.8 1.3 C0.2 1.3 0.3 4.2 2.2 4.6 M9.2 1.3 C10.8 1.3 10.7 4.2 8.8 4.6" stroke="#d6efe6" stroke-width="0.9" fill="none"/><path d="M4.6 7 L3.6 9.2 H7.4 L6.4 7 Z" fill="#d6efe6" fill-opacity="0.8"/><rect x="2.3" y="9.2" width="6.4" height="1.8" fill="#d6efe6"/></svg>
<div class="t" style="left:16px;top:146px;font-size:12px;line-height:14px;color:#d6efe6;letter-spacing:-0.639px;">KILL | XAUUSD SELL | $12.05 | TP/SL</div>
<svg class="b" style="left:2px;top:164px" width="11" height="12"><path d="M1.8 0.8 H9.2 V3.5 C9.2 5.8 7.6 7 5.5 7 C3.4 7 1.8 5.8 1.8 3.5 Z" fill="#d6efe6"/><rect x="4.4" y="1.6" width="2.2" height="4" fill="#1c2030" fill-opacity="0.7"/><path d="M1.8 1.3 C0.2 1.3 0.3 4.2 2.2 4.6 M9.2 1.3 C10.8 1.3 10.7 4.2 8.8 4.6" stroke="#d6efe6" stroke-width="0.9" fill="none"/><path d="M4.6 7 L3.6 9.2 H7.4 L6.4 7 Z" fill="#d6efe6" fill-opacity="0.8"/><rect x="2.3" y="9.2" width="6.4" height="1.8" fill="#d6efe6"/></svg>
<div class="t" style="left:16px;top:161px;font-size:12px;line-height:14px;color:#d6efe6;letter-spacing:-0.631px;">KILL | XAUUSD SELL | $4.78 | TP/SL</div>
<svg class="b" style="left:2px;top:179px" width="11" height="12"><path d="M1.8 0.8 H9.2 V3.5 C9.2 5.8 7.6 7 5.5 7 C3.4 7 1.8 5.8 1.8 3.5 Z" fill="#d6efe6"/><rect x="4.4" y="1.6" width="2.2" height="4" fill="#1c2030" fill-opacity="0.7"/><path d="M1.8 1.3 C0.2 1.3 0.3 4.2 2.2 4.6 M9.2 1.3 C10.8 1.3 10.7 4.2 8.8 4.6" stroke="#d6efe6" stroke-width="0.9" fill="none"/><path d="M4.6 7 L3.6 9.2 H7.4 L6.4 7 Z" fill="#d6efe6" fill-opacity="0.8"/><rect x="2.3" y="9.2" width="6.4" height="1.8" fill="#d6efe6"/></svg>
<div class="t" style="left:16px;top:176px;font-size:12px;line-height:14px;color:#d6efe6;letter-spacing:-0.631px;">KILL | XAUUSD SELL | $5.34 | TP/SL</div>
<svg class="b" style="left:2px;top:194px" width="11" height="12"><path d="M1.8 0.8 H9.2 V3.5 C9.2 5.8 7.6 7 5.5 7 C3.4 7 1.8 5.8 1.8 3.5 Z" fill="#d6efe6"/><rect x="4.4" y="1.6" width="2.2" height="4" fill="#1c2030" fill-opacity="0.7"/><path d="M1.8 1.3 C0.2 1.3 0.3 4.2 2.2 4.6 M9.2 1.3 C10.8 1.3 10.7 4.2 8.8 4.6" stroke="#d6efe6" stroke-width="0.9" fill="none"/><path d="M4.6 7 L3.6 9.2 H7.4 L6.4 7 Z" fill="#d6efe6" fill-opacity="0.8"/><rect x="2.3" y="9.2" width="6.4" height="1.8" fill="#d6efe6"/></svg>
<div class="t" style="left:16px;top:191px;font-size:12px;line-height:14px;color:#d6efe6;letter-spacing:-0.631px;">KILL | XAUUSD SELL | $8.62 | TP/SL</div>
<svg class="b" style="left:2px;top:209px" width="11" height="12"><path d="M1.8 0.8 H9.2 V3.5 C9.2 5.8 7.6 7 5.5 7 C3.4 7 1.8 5.8 1.8 3.5 Z" fill="#d6efe6"/><rect x="4.4" y="1.6" width="2.2" height="4" fill="#1c2030" fill-opacity="0.7"/><path d="M1.8 1.3 C0.2 1.3 0.3 4.2 2.2 4.6 M9.2 1.3 C10.8 1.3 10.7 4.2 8.8 4.6" stroke="#d6efe6" stroke-width="0.9" fill="none"/><path d="M4.6 7 L3.6 9.2 H7.4 L6.4 7 Z" fill="#d6efe6" fill-opacity="0.8"/><rect x="2.3" y="9.2" width="6.4" height="1.8" fill="#d6efe6"/></svg>
<div class="t" style="left:16px;top:206px;font-size:12px;line-height:14px;color:#d6efe6;letter-spacing:-0.631px;">KILL | XAUUSD SELL | $8.66 | TP/SL</div>
</div>
<div class="b" style="left:1154px;top:445px;width:17px;height:239px;background:#f0f0f0;"></div>
<svg class="b" style="left:1158px;top:451px" width="9" height="6"><path d="M1 5 L4.5 1.5 L8 5" stroke="#606060" stroke-width="1.6" fill="none"/></svg>
<svg class="b" style="left:1158px;top:673px" width="9" height="6"><path d="M1 1 L4.5 4.5 L8 1" stroke="#606060" stroke-width="1.6" fill="none"/></svg>
<div class="b" style="left:1156px;top:521px;width:13px;height:146px;background:#cdcdcd;"></div>
<svg class="b" style="left:1162px;top:675px" width="18" height="18"><rect width="18" height="18" fill="#8b5cf6"/><path d="M6 14 L14 6 L14 14 Z" fill="#1e1e2e"/></svg>
<div class="b" style="left:800px;top:713px;width:420px;height:120px;background:#1e1e2e;"></div>
<div class="b" style="left:800px;top:713px;width:420px;height:1px;background:#9a9aa2;"></div>
<div class="b" style="left:800px;top:713px;width:1px;height:120px;background:#9a9aa2;"></div>
<div class="b" style="left:801px;top:714px;width:418px;height:1px;background:#18181f;"></div>
<div class="b" style="left:801px;top:714px;width:1px;height:118px;background:#18181f;"></div>
<div class="b" style="left:1218px;top:714px;width:1px;height:118px;background:#6f6f78;"></div>
<div class="b" style="left:801px;top:831px;width:418px;height:1px;background:#6f6f78;"></div>
<div class="b" style="left:1219px;top:713px;width:1px;height:120px;background:#000;"></div>
<div class="b" style="left:800px;top:832px;width:420px;height:1px;background:#000;"></div>
<div class="b" style="left:802px;top:715px;width:416px;height:25px;background:#8b5cf6;"></div>
<div class="t" style="left:837px;top:720px;font-size:16px;line-height:17px;color:#1e1e2e;font-weight:bold;letter-spacing:-0.963px;">License Manager</div>
<svg class="b" style="left:811px;top:720px" width="20" height="18"><path d="M2.5 9 L2.5 5.5 C2.5 2.5 5 0.8 8 0.8 C10.5 0.8 12.5 2 13 4 L13 9 Z" fill="#1e1e2e"/><rect x="1.5" y="8.5" width="12" height="8" rx="1" fill="#8b5cf6" stroke="#1e1e2e" stroke-width="2"/><rect x="12.5" y="9.5" width="3" height="7.5" fill="#1e1e2e"/><circle cx="15" cy="6.5" r="3.6" fill="#8b5cf6" stroke="#1e1e2e" stroke-width="1.8"/></svg>
<div class="t" style="left:812.5px;top:750px;font-size:12px;line-height:14px;color:#d2f6ea;letter-spacing:-0.449px;">License Key:</div>
<div class="b" style="left:889px;top:747px;width:252px;height:19px;background:#282a35;"></div>
<div class="b" style="left:889px;top:747px;width:252px;height:1px;background:#16161d;"></div>
<div class="b" style="left:889px;top:747px;width:1px;height:19px;background:#16161d;"></div>
<div class="b" style="left:889px;top:765px;width:252px;height:1px;background:#a3a3a8;"></div>
<div class="b" style="left:1140px;top:748px;width:1px;height:18px;background:#a3a3a8;"></div>
<div class="t" style="left:891px;top:750px;font-size:12px;line-height:14px;color:#d2f6ea;letter-spacing:-0.056px;">MQ-PRO-lynsingexelth-2025</div>
<div class="b" style="left:1150px;top:745px;width:55px;height:24px;background:#2ee6de;"></div>
<div class="b" style="left:1150px;top:745px;width:55px;height:1px;background:#9ff7f2;"></div>
<div class="b" style="left:1150px;top:745px;width:1px;height:24px;background:#9ff7f2;"></div>
<div class="b" style="left:1150px;top:768px;width:55px;height:1px;background:#9ff7f2;"></div>
<div class="b" style="left:1204px;top:745px;width:1px;height:24px;background:#1a8f8a;"></div>
<div class="t" style="left:1154px;top:751px;font-size:12px;line-height:14px;color:#1e1e2e;letter-spacing:0.473px;">VALIDATE</div>
<svg class="b" style="left:929px;top:780px" width="14" height="14"><rect width="14" height="14" rx="1" fill="#3ef59a"/><path d="M3.1 7.3 L5.9 10.1 L11.2 3.9" stroke="#1e1e2e" stroke-width="1.4" fill="none"/></svg>
<div class="t" style="left:947px;top:780px;font-size:12px;line-height:14px;color:#3ef59a;letter-spacing:-0.157px;">Licence valide (cache local)</div>
<svg class="b" style="left:1202px;top:815px" width="18" height="18"><rect width="18" height="18" fill="#8b5cf6"/><path d="M6 14 L14 6 L14 14 Z" fill="#1e1e2e"/></svg>
<div class="b" style="left:441px;top:894px;width:520px;height:160px;background:#1e1e2e;"></div>
<div class="b" style="left:441px;top:894px;width:520px;height:1px;background:#9a9aa2;"></div>
<div class="b" style="left:441px;top:894px;width:1px;height:160px;background:#9a9aa2;"></div>
<div class="b" style="left:442px;top:895px;width:518px;height:1px;background:#18181f;"></div>
<div class="b" style="left:442px;top:895px;width:1px;height:158px;background:#18181f;"></div>
<div class="b" style="left:959px;top:895px;width:1px;height:158px;background:#6f6f78;"></div>
<div class="b" style="left:442px;top:1052px;width:518px;height:1px;background:#6f6f78;"></div>
<div class="b" style="left:960px;top:894px;width:1px;height:160px;background:#000;"></div>
<div class="b" style="left:441px;top:1053px;width:520px;height:1px;background:#000;"></div>
<div class="b" style="left:443px;top:896px;width:516px;height:25px;background:#8b5cf6;"></div>
<div class="t" style="left:452px;top:901px;font-size:16px;line-height:17px;color:#1e1e2e;font-weight:bold;letter-spacing:-1.737px;">Logs</div>
<div class="b" style="left:450px;top:926px;width:502px;height:119px;background:#1c2030;"></div>
<div class="b" style="left:450px;top:926px;width:502px;height:1px;background:#6a6a74;"></div>
<div class="b" style="left:450px;top:926px;width:1px;height:119px;background:#6a6a74;"></div>
<div class="b" style="left:450px;top:1044px;width:502px;height:1px;background:#a0a0a8;"></div>
<div class="b" style="left:451px;top:927px;width:484px;height:117px;overflow:hidden">
<div class="t" style="left:1.5px;top:-3px;font-size:12px;line-height:14px;color:#2f9cf2;letter-spacing:-0.268px;">[10:41:08] [HEDGING] Current sides: {&#x27;short&#x27;} | Signal: BUY</div>
<div class="t" style="left:1.5px;top:12px;font-size:12px;line-height:14px;color:#ff3d7a;letter-spacing:-0.334px;">[10:41:20]</div>
<svg class="b" style="left:55px;top:15.0px" width="10" height="9"><path d="M1.5 8 L1.5 5 C1.5 2.5 3 1 5 1 C7 1 8.5 2.5 8.5 5 L8.5 8 Z" fill="#ff3d7a"/><rect x="0" y="7" width="10" height="2" fill="#ff3d7a"/><circle cx="5" cy="5" r="1.3" fill="#1c2030"/></svg>
<div class="t" style="left:68.5px;top:12px;font-size:12px;line-height:14px;color:#ff3d7a;letter-spacing:-0.572px;">LOOP DETECTED: BUY XAUUSD - Forcing pause</div>
<div class="t" style="left:1.5px;top:27px;font-size:12px;line-height:14px;color:#8c7cf8;letter-spacing:-0.275px;">[10:41:32] [FORCED PAUSE] Cooling down (107s remaining)</div>
<div class="t" style="left:1.5px;top:42px;font-size:12px;line-height:14px;color:#8c7cf8;letter-spacing:-0.268px;">[10:42:32] [FORCED PAUSE] Cooling down (47s remaining)</div>
<div class="t" style="left:1.5px;top:57px;font-size:12px;line-height:14px;color:#ff3d7a;letter-spacing:-0.327px;">[10:43:30] [HEDGE BLOCK] BUY blocked - Have SHORT positions</div>
<div class="t" style="left:1.5px;top:72px;font-size:12px;line-height:14px;color:#ff3d7a;letter-spacing:-0.334px;">[10:43:42]</div>
<svg class="b" style="left:55px;top:75.0px" width="10" height="9"><path d="M1.5 8 L1.5 5 C1.5 2.5 3 1 5 1 C7 1 8.5 2.5 8.5 5 L8.5 8 Z" fill="#ff3d7a"/><rect x="0" y="7" width="10" height="2" fill="#ff3d7a"/><circle cx="5" cy="5" r="1.3" fill="#1c2030"/></svg>
<div class="t" style="left:68.5px;top:72px;font-size:12px;line-height:14px;color:#ff3d7a;letter-spacing:-0.572px;">LOOP DETECTED: BUY XAUUSD - Forcing pause</div>
<div class="t" style="left:1.5px;top:87px;font-size:12px;line-height:14px;color:#8c7cf8;letter-spacing:-0.268px;">[10:44:24] [FORCED PAUSE] Cooling down (77s remaining)</div>
</div>
<div class="b" style="left:935px;top:926px;width:17px;height:119px;background:#f0f0f0;"></div>
<svg class="b" style="left:939px;top:932px" width="9" height="6"><path d="M1 5 L4.5 1.5 L8 5" stroke="#606060" stroke-width="1.6" fill="none"/></svg>
<svg class="b" style="left:939px;top:1034px" width="9" height="6"><path d="M1 1 L4.5 4.5 L8 1" stroke="#606060" stroke-width="1.6" fill="none"/></svg>
<div class="b" style="left:937px;top:1011px;width:13px;height:17px;background:#cdcdcd;"></div>
<svg class="b" style="left:943px;top:1036px" width="18" height="18"><rect width="18" height="18" fill="#8b5cf6"/><path d="M6 14 L14 6 L14 14 Z" fill="#1e1e2e"/></svg>
<div class="b" style="left:1200px;top:33px;width:400px;height:388px;background:#1e1e2e;"></div>
<div class="b" style="left:1200px;top:33px;width:400px;height:1px;background:#9a9aa2;"></div>
<div class="b" style="left:1200px;top:33px;width:1px;height:388px;background:#9a9aa2;"></div>
<div class="b" style="left:1201px;top:34px;width:398px;height:1px;background:#18181f;"></div>
<div class="b" style="left:1201px;top:34px;width:1px;height:386px;background:#18181f;"></div>
<div class="b" style="left:1598px;top:34px;width:1px;height:386px;background:#6f6f78;"></div>
<div class="b" style="left:1201px;top:419px;width:398px;height:1px;background:#6f6f78;"></div>
<div class="b" style="left:1599px;top:33px;width:1px;height:388px;background:#000;"></div>
<div class="b" style="left:1200px;top:420px;width:400px;height:1px;background:#000;"></div>
<div class="b" style="left:1202px;top:35px;width:396px;height:25px;background:#8b5cf6;"></div>
<div class="t" style="left:1236px;top:40px;font-size:16px;line-height:17px;color:#1e1e2e;font-weight:bold;letter-spacing:-0.823px;">Trading Logic</div>
<svg class="b" style="left:1208.5px;top:39px" width="22.3" height="18.6" viewBox="0 0 24 20"><path d="M5 13.2 C3 11 3.5 7 6 5.5 C8 3.8 11 3.2 13 3.6 C15.5 3.3 18.5 4.5 20 7 C21.5 9.5 21 14 19 15.8 C17.5 17.3 14.5 17.5 12.5 16.3 C10.5 15.8 8 15.8 5 13.2 Z M12.5 3.8 L12 6.3 M8.5 8.5 L12.5 8.5 M10.5 8.5 C9 9.5 8.8 12 9.3 14 M15.5 7.5 C17 8 18.5 9 19.8 9.5 M12 15 C13.5 12.8 16 12.3 18.5 13.2" stroke="#1e1e2e" stroke-width="1.5" fill="none" stroke-linejoin="round" stroke-linecap="round"/></svg>
<svg class="b" style="left:1318px;top:68px" width="24.0" height="20.0" viewBox="0 0 24 20"><path d="M5 13.2 C3 11 3.5 7 6 5.5 C8 3.8 11 3.2 13 3.6 C15.5 3.3 18.5 4.5 20 7 C21.5 9.5 21 14 19 15.8 C17.5 17.3 14.5 17.5 12.5 16.3 C10.5 15.8 8 15.8 5 13.2 Z M12.5 3.8 L12 6.3 M8.5 8.5 L12.5 8.5 M10.5 8.5 C9 9.5 8.8 12 9.3 14 M15.5 7.5 C17 8 18.5 9 19.8 9.5 M12 15 C13.5 12.8 16 12.3 18.5 13.2" stroke="#2ee6de" stroke-width="1.8" fill="none" stroke-linejoin="round" stroke-linecap="round"/></svg>
<div class="t" style="left:1346px;top:70px;font-size:16px;line-height:17px;color:#2ee6de;font-weight:bold;letter-spacing:-0.628px;">ANTI-LOOP BRAIN</div>
<div class="t" style="left:1282px;top:102px;font-size:12px;line-height:14px;color:#d2f6ea;letter-spacing:-0.242px;">Hunts: 274 | Kills: 19 | Misses: 2 | Memory: OK</div>
<div class="b" style="left:1209px;top:126px;width:382px;height:294px;background:#0c0b12;"></div>
<div class="b" style="left:1209px;top:126px;width:364px;height:1px;background:#5c5c66;"></div>
<div class="b" style="left:1209px;top:126px;width:1px;height:294px;background:#5c5c66;"></div>
<div class="b" style="left:1573px;top:126px;width:18px;height:294px;background:#f0f0f0;"></div>
<svg class="b" style="left:1578px;top:131px" width="9" height="6"><path d="M1 5 L4.5 1.5 L8 5" stroke="#606060" stroke-width="1.6" fill="none"/></svg>
<div class="b" style="left:1210px;top:128px;width:363px;height:276px;overflow:hidden">
<div class="t" style="left:1.2999999999999545px;top:-2px;font-size:10px;line-height:11px;color:#08dcfa;font-family:'Liberation Mono', monospace;-webkit-text-stroke:0.12px #08dcfa;">[10:43:30] HUNT:</div>
<svg class="b" style="left:103.5px;top:-2.1999999999999886px" width="11" height="10"><rect x="1" y="1" width="9" height="8" rx="1" fill="#08dcfa" fill-opacity="0.55"/><path d="M1 9 L9 1 M5 1 L9 1 L9 5" stroke="#08dcfa" stroke-width="1.4" fill="none"/></svg>
<div class="t" style="left:121.29999999999995px;top:-2px;font-size:10px;line-height:11px;color:#08dcfa;font-family:'Liberation Mono', monospace;-webkit-text-stroke:0.12px #08dcfa;">BULLISH HUNT DETECTED! Mid-Support swept</div>
<div class="t" style="left:1.2999999999999545px;top:11px;font-size:10px;line-height:11px;color:#08dcfa;font-family:'Liberation Mono', monospace;-webkit-text-stroke:0.12px #08dcfa;">&amp; bounced</div>
<div class="t" style="left:1.2999999999999545px;top:24px;font-size:10px;line-height:11px;color:#08dcfa;font-family:'Liberation Mono', monospace;-webkit-text-stroke:0.12px #08dcfa;">[10:43:30] HUNT:</div>
<div class="b" style="left:118px;top:23px;width:1px;height:5px;background:#08dcfa;"></div>
<div class="b" style="left:118px;top:27px;width:8px;height:1px;background:#08dcfa;"></div>
<div class="t" style="left:133.29999999999995px;top:24px;font-size:10px;line-height:11px;color:#08dcfa;font-family:'Liberation Mono', monospace;-webkit-text-stroke:0.12px #08dcfa;">Price: 3550.6 | Vol: 1.00x | Pattern:</div>
<div class="t" style="left:1.2999999999999545px;top:37px;font-size:10px;line-height:11px;color:#08dcfa;font-family:'Liberation Mono', monospace;-webkit-text-stroke:0.12px #08dcfa;">1/2</div>
<div class="t" style="left:1.2999999999999545px;top:50px;font-size:10px;line-height:11px;color:#1fe22c;font-family:'Liberation Mono', monospace;-webkit-text-stroke:0.12px #1fe22c;">[10:43:30] SIGNAL:</div>
<svg class="b" style="left:115px;top:49.30000000000001px" width="10.6" height="10.6"><circle cx="5.3" cy="5.3" r="4.6" fill="#1fe22c"/><circle cx="5.3" cy="5.3" r="2.88" fill="#0c0b12"/><circle cx="5.3" cy="5.3" r="1.44" fill="#1fe22c"/></svg>
<div class="t" style="left:133.29999999999995px;top:50px;font-size:10px;line-height:11px;color:#1fe22c;font-family:'Liberation Mono', monospace;-webkit-text-stroke:0.12px #1fe22c;">SIGNAL: BUY</div>
<div class="t" style="left:1.2999999999999545px;top:63px;font-size:10px;line-height:11px;color:#ff2d55;font-family:'Liberation Mono', monospace;-webkit-text-stroke:0.12px #ff2d55;">[10:43:32] LEVEL:</div>
<svg class="b" style="left:109px;top:62.30000000000001px" width="10.6" height="10.6"><circle cx="5.3" cy="5.3" r="4.6" fill="#ff2d55"/><circle cx="5.3" cy="5.3" r="2.88" fill="#0c0b12"/><circle cx="5.3" cy="5.3" r="1.44" fill="#ff2d55"/></svg>
<div class="t" style="left:127.29999999999995px;top:63px;font-size:10px;line-height:11px;color:#ff2d55;font-family:'Liberation Mono', monospace;-webkit-text-stroke:0.12px #ff2d55;">Hunt zones: S=3546.0 MS=3549.5</div>
<div class="t" style="left:1.2999999999999545px;top:76px;font-size:10px;line-height:11px;color:#ff2d55;font-family:'Liberation Mono', monospace;-webkit-text-stroke:0.12px #ff2d55;">MR=3555.4 R=3556.6</div>
<div class="t" style="left:1.2999999999999545px;top:89px;font-size:10px;line-height:11px;color:#08dcfa;font-family:'Liberation Mono', monospace;-webkit-text-stroke:0.12px #08dcfa;">[10:43:32] HUNT:</div>
<svg class="b" style="left:103.5px;top:88.80000000000001px" width="11" height="10"><rect x="1" y="1" width="9" height="8" rx="1" fill="#08dcfa" fill-opacity="0.55"/><path d="M1 9 L9 1 M5 1 L9 1 L9 5" stroke="#08dcfa" stroke-width="1.4" fill="none"/></svg>
<div class="t" style="left:121.29999999999995px;top:89px;font-size:10px;line-height:11px;color:#08dcfa;font-family:'Liberation Mono', monospace;-webkit-text-stroke:0.12px #08dcfa;">BULLISH HUNT DETECTED! Mid-Support swept</div>
<div class="t" style="left:1.2999999999999545px;top:102px;font-size:10px;line-height:11px;color:#08dcfa;font-family:'Liberation Mono', monospace;-webkit-text-stroke:0.12px #08dcfa;">&amp; bounced</div>
<div class="t" style="left:1.2999999999999545px;top:115px;font-size:10px;line-height:11px;color:#08dcfa;font-family:'Liberation Mono', monospace;-webkit-text-stroke:0.12px #08dcfa;">[10:43:32] HUNT:</div>
<div class="b" style="left:118px;top:114px;width:1px;height:5px;background:#08dcfa;"></div>
<div class="b" style="left:118px;top:118px;width:8px;height:1px;background:#08dcfa;"></div>
<div class="t" style="left:133.29999999999995px;top:115px;font-size:10px;line-height:11px;color:#08dcfa;font-family:'Liberation Mono', monospace;-webkit-text-stroke:0.12px #08dcfa;">Price: 3550.6 | Vol: 1.00x | Pattern:</div>
<div class="t" style="left:1.2999999999999545px;top:128px;font-size:10px;line-height:11px;color:#08dcfa;font-family:'Liberation Mono', monospace;-webkit-text-stroke:0.12px #08dcfa;">1/2</div>
<div class="t" style="left:1.2999999999999545px;top:141px;font-size:10px;line-height:11px;color:#1fe22c;font-family:'Liberation Mono', monospace;-webkit-text-stroke:0.12px #1fe22c;">[10:43:33] SIGNAL:</div>
<svg class="b" style="left:115px;top:140.3px" width="10.6" height="10.6"><circle cx="5.3" cy="5.3" r="4.6" fill="#1fe22c"/><circle cx="5.3" cy="5.3" r="2.88" fill="#0c0b12"/><circle cx="5.3" cy="5.3" r="1.44" fill="#1fe22c"/></svg>
<div class="t" style="left:133.29999999999995px;top:141px;font-size:10px;line-height:11px;color:#1fe22c;font-family:'Liberation Mono', monospace;-webkit-text-stroke:0.12px #1fe22c;">SIGNAL: BUY</div>
<div class="t" style="left:1.2999999999999545px;top:154px;font-size:10px;line-height:11px;color:#ff2d55;font-family:'Liberation Mono', monospace;-webkit-text-stroke:0.12px #ff2d55;">[10:43:35] LEVEL:</div>
<svg class="b" style="left:109px;top:153.3px" width="10.6" height="10.6"><circle cx="5.3" cy="5.3" r="4.6" fill="#ff2d55"/><circle cx="5.3" cy="5.3" r="2.88" fill="#0c0b12"/><circle cx="5.3" cy="5.3" r="1.44" fill="#ff2d55"/></svg>
<div class="t" style="left:127.29999999999995px;top:154px;font-size:10px;line-height:11px;color:#ff2d55;font-family:'Liberation Mono', monospace;-webkit-text-stroke:0.12px #ff2d55;">Hunt zones: S=3546.0 MS=3549.5</div>
<div class="t" style="left:1.2999999999999545px;top:167px;font-size:10px;line-height:11px;color:#ff2d55;font-family:'Liberation Mono', monospace;-webkit-text-stroke:0.12px #ff2d55;">MR=3555.4 R=3556.6</div>
<div class="t" style="left:1.2999999999999545px;top:180px;font-size:10px;line-height:11px;color:#08dcfa;font-family:'Liberation Mono', monospace;-webkit-text-stroke:0.12px #08dcfa;">[10:43:35] HUNT:</div>
<svg class="b" style="left:103.5px;top:179.8px" width="11" height="10"><rect x="1" y="1" width="9" height="8" rx="1" fill="#08dcfa" fill-opacity="0.55"/><path d="M1 9 L9 1 M5 1 L9 1 L9 5" stroke="#08dcfa" stroke-width="1.4" fill="none"/></svg>
<div class="t" style="left:121.29999999999995px;top:180px;font-size:10px;line-height:11px;color:#08dcfa;font-family:'Liberation Mono', monospace;-webkit-text-stroke:0.12px #08dcfa;">BULLISH HUNT DETECTED! Mid-Support swept</div>
<div class="t" style="left:1.2999999999999545px;top:193px;font-size:10px;line-height:11px;color:#08dcfa;font-family:'Liberation Mono', monospace;-webkit-text-stroke:0.12px #08dcfa;">&amp; bounced</div>
<div class="t" style="left:1.2999999999999545px;top:206px;font-size:10px;line-height:11px;color:#08dcfa;font-family:'Liberation Mono', monospace;-webkit-text-stroke:0.12px #08dcfa;">[10:43:35] HUNT:</div>
<div class="b" style="left:118px;top:205px;width:1px;height:5px;background:#08dcfa;"></div>
<div class="b" style="left:118px;top:209px;width:8px;height:1px;background:#08dcfa;"></div>
<div class="t" style="left:133.29999999999995px;top:206px;font-size:10px;line-height:11px;color:#08dcfa;font-family:'Liberation Mono', monospace;-webkit-text-stroke:0.12px #08dcfa;">Price: 3550.6 | Vol: 1.00x | Pattern:</div>
<div class="t" style="left:1.2999999999999545px;top:219px;font-size:10px;line-height:11px;color:#08dcfa;font-family:'Liberation Mono', monospace;-webkit-text-stroke:0.12px #08dcfa;">1/2</div>
<div class="t" style="left:1.2999999999999545px;top:232px;font-size:10px;line-height:11px;color:#1fe22c;font-family:'Liberation Mono', monospace;-webkit-text-stroke:0.12px #1fe22c;">[10:43:35] SIGNAL:</div>
<svg class="b" style="left:115px;top:231.3px" width="10.6" height="10.6"><circle cx="5.3" cy="5.3" r="4.6" fill="#1fe22c"/><circle cx="5.3" cy="5.3" r="2.88" fill="#0c0b12"/><circle cx="5.3" cy="5.3" r="1.44" fill="#1fe22c"/></svg>
<div class="t" style="left:133.29999999999995px;top:232px;font-size:10px;line-height:11px;color:#1fe22c;font-family:'Liberation Mono', monospace;-webkit-text-stroke:0.12px #1fe22c;">SIGNAL: BUY</div>
<div class="t" style="left:1.2999999999999545px;top:245px;font-size:10px;line-height:11px;color:#ff2d55;font-family:'Liberation Mono', monospace;-webkit-text-stroke:0.12px #ff2d55;">[10:43:37] LEVEL:</div>
<svg class="b" style="left:109px;top:244.3px" width="10.6" height="10.6"><circle cx="5.3" cy="5.3" r="4.6" fill="#ff2d55"/><circle cx="5.3" cy="5.3" r="2.88" fill="#0c0b12"/><circle cx="5.3" cy="5.3" r="1.44" fill="#ff2d55"/></svg>
<div class="t" style="left:127.29999999999995px;top:245px;font-size:10px;line-height:11px;color:#ff2d55;font-family:'Liberation Mono', monospace;-webkit-text-stroke:0.12px #ff2d55;">Hunt zones: S=3546.0 MS=3549.5</div>
<div class="t" style="left:1.2999999999999545px;top:258px;font-size:10px;line-height:11px;color:#ff2d55;font-family:'Liberation Mono', monospace;-webkit-text-stroke:0.12px #ff2d55;">MR=3555.4 R=3556.6</div>
<div class="t" style="left:1.2999999999999545px;top:271px;font-size:10px;line-height:11px;color:#08dcfa;font-family:'Liberation Mono', monospace;-webkit-text-stroke:0.12px #08dcfa;">[10:43:37] HUNT:</div>
<svg class="b" style="left:103.5px;top:270.8px" width="11" height="10"><rect x="1" y="1" width="9" height="8" rx="1" fill="#08dcfa" fill-opacity="0.55"/><path d="M1 9 L9 1 M5 1 L9 1 L9 5" stroke="#08dcfa" stroke-width="1.4" fill="none"/></svg>
<div class="t" style="left:121.29999999999995px;top:271px;font-size:10px;line-height:11px;color:#08dcfa;font-family:'Liberation Mono', monospace;-webkit-text-stroke:0.12px #08dcfa;">BULLISH HUNT DETECTED! Mid-Support swept</div>
</div>
<div class="b" style="left:1200px;top:403px;width:400px;height:370px;background:#1e1e2e;"></div>
<div class="b" style="left:1200px;top:403px;width:400px;height:1px;background:#9a9aa2;"></div>
<div class="b" style="left:1200px;top:403px;width:1px;height:370px;background:#9a9aa2;"></div>
<div class="b" style="left:1201px;top:404px;width:398px;height:1px;background:#18181f;"></div>
<div class="b" style="left:1201px;top:404px;width:1px;height:368px;background:#18181f;"></div>
<div class="b" style="left:1598px;top:404px;width:1px;height:368px;background:#6f6f78;"></div>
<div class="b" style="left:1201px;top:771px;width:398px;height:1px;background:#6f6f78;"></div>
<div class="b" style="left:1599px;top:403px;width:1px;height:370px;background:#000;"></div>
<div class="b" style="left:1200px;top:772px;width:400px;height:1px;background:#000;"></div>
<div class="b" style="left:1202px;top:405px;width:396px;height:25px;background:#8b5cf6;"></div>
<div class="t" style="left:1236px;top:410px;font-size:16px;line-height:17px;color:#1e1e2e;font-weight:bold;letter-spacing:-0.613px;">AI Trading Assistant</div>
<svg class="b" style="left:1212px;top:410px" width="18.0" height="17.0" viewBox="0 0 18 17"><circle cx="3" cy="3" r="2.3" fill="#1e1e2e"/><circle cx="15" cy="3" r="2.3" fill="#1e1e2e"/><path d="M2.5 4 C2 9 3 15.5 9 16 C15 15.5 16 9 15.5 4 C12 2.5 6 2.5 2.5 4 Z" fill="#1e1e2e"/><path d="M4.5 10 C5 13 7 14 9 14 C11 14 13 13 13.5 10 Z" fill="#8b5cf6"/><rect x="5" y="6" width="2.2" height="2.2" fill="#8b5cf6"/><rect x="10.8" y="6" width="2.2" height="2.2" fill="#8b5cf6"/><rect x="8.2" y="4.5" width="1.6" height="3" fill="#8b5cf6"/></svg>
<svg class="b" style="left:1312px;top:437px" width="18.0" height="17.0" viewBox="0 0 18 17"><circle cx="3" cy="3" r="2.3" fill="#2ee6de"/><circle cx="15" cy="3" r="2.3" fill="#2ee6de"/><path d="M2.5 4 C2 9 3 15.5 9 16 C15 15.5 16 9 15.5 4 C12 2.5 6 2.5 2.5 4 Z" fill="#2ee6de"/><path d="M4.5 10 C5 13 7 14 9 14 C11 14 13 13 13.5 10 Z" fill="#1e1e2e"/><rect x="5" y="6" width="2.2" height="2.2" fill="#1e1e2e"/><rect x="10.8" y="6" width="2.2" height="2.2" fill="#1e1e2e"/><rect x="8.2" y="4.5" width="1.6" height="3" fill="#1e1e2e"/></svg>
<div class="t" style="left:1336px;top:437px;font-size:16px;line-height:17px;color:#2ee6de;font-weight:bold;letter-spacing:-0.477px;">AI Assistant (Limited)</div>
<svg class="b" style="left:1364px;top:465px" width="14" height="14"><rect width="14" height="14" rx="1" fill="#3ef59a"/><path d="M3.1 7.3 L5.9 10.1 L11.2 3.9" stroke="#1e1e2e" stroke-width="1.4" fill="none"/></svg>
<div class="t" style="left:1382.5px;top:466px;font-size:12px;line-height:14px;color:#3ef59a;letter-spacing:-0.76px;">G4F Ready</div>
<div class="b" style="left:1209px;top:488px;width:382px;height:225px;background:#0f0f1a;"></div>
<div class="b" style="left:1209px;top:488px;width:365px;height:1px;background:#5c5c66;"></div>
<div class="b" style="left:1209px;top:488px;width:1px;height:225px;background:#5c5c66;"></div>
<div class="b" style="left:1209px;top:712px;width:365px;height:1px;background:#a0a0a8;"></div>
<div class="b" style="left:1574px;top:488px;width:17px;height:225px;background:#f0f0f0;"></div>
<svg class="b" style="left:1578px;top:494px" width="9" height="6"><path d="M1 5 L4.5 1.5 L8 5" stroke="#b8b8b8" stroke-width="1.6" fill="none"/></svg>
<svg class="b" style="left:1578px;top:702px" width="9" height="6"><path d="M1 1 L4.5 4.5 L8 1" stroke="#b8b8b8" stroke-width="1.6" fill="none"/></svg>
<div class="t" style="left:1211.3px;top:490px;font-size:12px;line-height:14px;color:#4ae38a;letter-spacing:-0.667px;">[06:18]</div>
<svg class="b" style="left:1247.5px;top:491.8px" width="10.8" height="10.2" viewBox="0 0 18 17"><circle cx="3" cy="3" r="2.3" fill="#4ae38a"/><circle cx="15" cy="3" r="2.3" fill="#4ae38a"/><path d="M2.5 4 C2 9 3 15.5 9 16 C15 15.5 16 9 15.5 4 C12 2.5 6 2.5 2.5 4 Z" fill="#4ae38a"/><path d="M4.5 10 C5 13 7 14 9 14 C11 14 13 13 13.5 10 Z" fill="#0f0f1a"/><rect x="5" y="6" width="2.2" height="2.2" fill="#0f0f1a"/><rect x="10.8" y="6" width="2.2" height="2.2" fill="#0f0f1a"/><rect x="8.2" y="4.5" width="1.6" height="3" fill="#0f0f1a"/></svg>
<div class="t" style="left:1262.5px;top:490px;font-size:12px;line-height:14px;color:#4ae38a;letter-spacing:-0.408px;">AI Assistant:</div>
<svg class="b" style="left:1328px;top:491.8px" width="10.8" height="10.2" viewBox="0 0 18 17"><circle cx="3" cy="3" r="2.3" fill="#4ae38a"/><circle cx="15" cy="3" r="2.3" fill="#4ae38a"/><path d="M2.5 4 C2 9 3 15.5 9 16 C15 15.5 16 9 15.5 4 C12 2.5 6 2.5 2.5 4 Z" fill="#4ae38a"/><path d="M4.5 10 C5 13 7 14 9 14 C11 14 13 13 13.5 10 Z" fill="#0f0f1a"/><rect x="5" y="6" width="2.2" height="2.2" fill="#0f0f1a"/><rect x="10.8" y="6" width="2.2" height="2.2" fill="#0f0f1a"/><rect x="8.2" y="4.5" width="1.6" height="3" fill="#0f0f1a"/></svg>
<div class="t" style="left:1342.5px;top:490px;font-size:12px;line-height:14px;color:#4ae38a;letter-spacing:-0.425px;">Ready (Memory Optimized)</div>
<div class="t" style="left:1211.3px;top:516px;font-size:12px;line-height:14px;color:#2b93f5;letter-spacing:-0.667px;">[06:31]</div>
<svg class="b" style="left:1247.5px;top:517.8px" width="10.8" height="10.2" viewBox="0 0 18 17"><circle cx="3" cy="3" r="2.3" fill="#2b93f5"/><circle cx="15" cy="3" r="2.3" fill="#2b93f5"/><path d="M2.5 4 C2 9 3 15.5 9 16 C15 15.5 16 9 15.5 4 C12 2.5 6 2.5 2.5 4 Z" fill="#2b93f5"/><path d="M4.5 10 C5 13 7 14 9 14 C11 14 13 13 13.5 10 Z" fill="#0f0f1a"/><rect x="5" y="6" width="2.2" height="2.2" fill="#0f0f1a"/><rect x="10.8" y="6" width="2.2" height="2.2" fill="#0f0f1a"/><rect x="8.2" y="4.5" width="1.6" height="3" fill="#0f0f1a"/></svg>
<div class="t" style="left:1262.5px;top:516px;font-size:12px;line-height:14px;color:#2b93f5;letter-spacing:-0.267px;">Bot Alert:</div>
<svg class="b" style="left:1313px;top:516.8px" width="13" height="13"><rect width="13" height="13" rx="1" fill="#2b93f5"/><path d="M2.9 6.8 L5.5 9.4 L10.4 3.6" stroke="#0f0f1a" stroke-width="1.4" fill="none"/></svg>
<div class="t" style="left:1330.3px;top:516px;font-size:12px;line-height:14px;color:#2b93f5;letter-spacing:-0.732px;">Trade: BUY 0.10</div>
<div class="t" style="left:1211.3px;top:542px;font-size:12px;line-height:14px;color:#2b93f5;letter-spacing:-0.667px;">[06:34]</div>
<svg class="b" style="left:1247.5px;top:543.8px" width="10.8" height="10.2" viewBox="0 0 18 17"><circle cx="3" cy="3" r="2.3" fill="#2b93f5"/><circle cx="15" cy="3" r="2.3" fill="#2b93f5"/><path d="M2.5 4 C2 9 3 15.5 9 16 C15 15.5 16 9 15.5 4 C12 2.5 6 2.5 2.5 4 Z" fill="#2b93f5"/><path d="M4.5 10 C5 13 7 14 9 14 C11 14 13 13 13.5 10 Z" fill="#0f0f1a"/><rect x="5" y="6" width="2.2" height="2.2" fill="#0f0f1a"/><rect x="10.8" y="6" width="2.2" height="2.2" fill="#0f0f1a"/><rect x="8.2" y="4.5" width="1.6" height="3" fill="#0f0f1a"/></svg>
<div class="t" style="left:1262.5px;top:542px;font-size:12px;line-height:14px;color:#2b93f5;letter-spacing:-0.267px;">Bot Alert:</div>
<svg class="b" style="left:1313px;top:542.8px" width="13" height="13"><rect width="13" height="13" rx="1" fill="#2b93f5"/><path d="M2.9 6.8 L5.5 9.4 L10.4 3.6" stroke="#0f0f1a" stroke-width="1.4" fill="none"/></svg>
<div class="t" style="left:1330.3px;top:542px;font-size:12px;line-height:14px;color:#2b93f5;letter-spacing:-0.732px;">Trade: BUY 0.10</div>
<div class="t" style="left:1211.3px;top:568px;font-size:12px;line-height:14px;color:#2b93f5;letter-spacing:-0.667px;">[06:38]</div>
<svg class="b" style="left:1247.5px;top:569.8px" width="10.8" height="10.2" viewBox="0 0 18 17"><circle cx="3" cy="3" r="2.3" fill="#2b93f5"/><circle cx="15" cy="3" r="2.3" fill="#2b93f5"/><path d="M2.5 4 C2 9 3 15.5 9 16 C15 15.5 16 9 15.5 4 C12 2.5 6 2.5 2.5 4 Z" fill="#2b93f5"/><path d="M4.5 10 C5 13 7 14 9 14 C11 14 13 13 13.5 10 Z" fill="#0f0f1a"/><rect x="5" y="6" width="2.2" height="2.2" fill="#0f0f1a"/><rect x="10.8" y="6" width="2.2" height="2.2" fill="#0f0f1a"/><rect x="8.2" y="4.5" width="1.6" height="3" fill="#0f0f1a"/></svg>
<div class="t" style="left:1262.5px;top:568px;font-size:12px;line-height:14px;color:#2b93f5;letter-spacing:-0.267px;">Bot Alert:</div>
<svg class="b" style="left:1313px;top:568.8px" width="13" height="13"><rect width="13" height="13" rx="1" fill="#2b93f5"/><path d="M2.9 6.8 L5.5 9.4 L10.4 3.6" stroke="#0f0f1a" stroke-width="1.4" fill="none"/></svg>
<div class="t" style="left:1330.3px;top:568px;font-size:12px;line-height:14px;color:#2b93f5;letter-spacing:-0.732px;">Trade: BUY 0.10</div>
<div class="t" style="left:1211.3px;top:594px;font-size:12px;line-height:14px;color:#2b93f5;letter-spacing:-0.667px;">[06:47]</div>
<svg class="b" style="left:1247.5px;top:595.8px" width="10.8" height="10.2" viewBox="0 0 18 17"><circle cx="3" cy="3" r="2.3" fill="#2b93f5"/><circle cx="15" cy="3" r="2.3" fill="#2b93f5"/><path d="M2.5 4 C2 9 3 15.5 9 16 C15 15.5 16 9 15.5 4 C12 2.5 6 2.5 2.5 4 Z" fill="#2b93f5"/><path d="M4.5 10 C5 13 7 14 9 14 C11 14 13 13 13.5 10 Z" fill="#0f0f1a"/><rect x="5" y="6" width="2.2" height="2.2" fill="#0f0f1a"/><rect x="10.8" y="6" width="2.2" height="2.2" fill="#0f0f1a"/><rect x="8.2" y="4.5" width="1.6" height="3" fill="#0f0f1a"/></svg>
<div class="t" style="left:1262.5px;top:594px;font-size:12px;line-height:14px;color:#2b93f5;letter-spacing:-0.267px;">Bot Alert:</div>
<svg class="b" style="left:1313px;top:594.8px" width="13" height="13"><rect width="13" height="13" rx="1" fill="#2b93f5"/><path d="M2.9 6.8 L5.5 9.4 L10.4 3.6" stroke="#0f0f1a" stroke-width="1.4" fill="none"/></svg>
<div class="t" style="left:1330.3px;top:594px;font-size:12px;line-height:14px;color:#2b93f5;letter-spacing:-0.732px;">Trade: BUY 0.10</div>
<div class="t" style="left:1211.3px;top:620px;font-size:12px;line-height:14px;color:#2b93f5;letter-spacing:-0.54px;">[09:11]</div>
<svg class="b" style="left:1247.5px;top:621.8px" width="10.8" height="10.2" viewBox="0 0 18 17"><circle cx="3" cy="3" r="2.3" fill="#2b93f5"/><circle cx="15" cy="3" r="2.3" fill="#2b93f5"/><path d="M2.5 4 C2 9 3 15.5 9 16 C15 15.5 16 9 15.5 4 C12 2.5 6 2.5 2.5 4 Z" fill="#2b93f5"/><path d="M4.5 10 C5 13 7 14 9 14 C11 14 13 13 13.5 10 Z" fill="#0f0f1a"/><rect x="5" y="6" width="2.2" height="2.2" fill="#0f0f1a"/><rect x="10.8" y="6" width="2.2" height="2.2" fill="#0f0f1a"/><rect x="8.2" y="4.5" width="1.6" height="3" fill="#0f0f1a"/></svg>
<div class="t" style="left:1262.5px;top:620px;font-size:12px;line-height:14px;color:#2b93f5;letter-spacing:-0.267px;">Bot Alert:</div>
<svg class="b" style="left:1313px;top:620.8px" width="13" height="13"><rect width="13" height="13" rx="1" fill="#2b93f5"/><path d="M2.9 6.8 L5.5 9.4 L10.4 3.6" stroke="#0f0f1a" stroke-width="1.4" fill="none"/></svg>
<div class="t" style="left:1330.3px;top:620px;font-size:12px;line-height:14px;color:#2b93f5;letter-spacing:-0.778px;">Trade: SELL 0.10</div>
<div class="t" style="left:1211.3px;top:646px;font-size:12px;line-height:14px;color:#2b93f5;letter-spacing:-0.667px;">[09:13]</div>
<svg class="b" style="left:1247.5px;top:647.8px" width="10.8" height="10.2" viewBox="0 0 18 17"><circle cx="3" cy="3" r="2.3" fill="#2b93f5"/><circle cx="15" cy="3" r="2.3" fill="#2b93f5"/><path d="M2.5 4 C2 9 3 15.5 9 16 C15 15.5 16 9 15.5 4 C12 2.5 6 2.5 2.5 4 Z" fill="#2b93f5"/><path d="M4.5 10 C5 13 7 14 9 14 C11 14 13 13 13.5 10 Z" fill="#0f0f1a"/><rect x="5" y="6" width="2.2" height="2.2" fill="#0f0f1a"/><rect x="10.8" y="6" width="2.2" height="2.2" fill="#0f0f1a"/><rect x="8.2" y="4.5" width="1.6" height="3" fill="#0f0f1a"/></svg>
<div class="t" style="left:1262.5px;top:646px;font-size:12px;line-height:14px;color:#2b93f5;letter-spacing:-0.267px;">Bot Alert:</div>
<svg class="b" style="left:1313px;top:646.8px" width="13" height="13"><rect width="13" height="13" rx="1" fill="#2b93f5"/><path d="M2.9 6.8 L5.5 9.4 L10.4 3.6" stroke="#0f0f1a" stroke-width="1.4" fill="none"/></svg>
<div class="t" style="left:1330.3px;top:646px;font-size:12px;line-height:14px;color:#2b93f5;letter-spacing:-0.778px;">Trade: SELL 0.10</div>
<div class="t" style="left:1211.3px;top:672px;font-size:12px;line-height:14px;color:#2b93f5;letter-spacing:-0.667px;">[09:42]</div>
<svg class="b" style="left:1247.5px;top:673.8px" width="10.8" height="10.2" viewBox="0 0 18 17"><circle cx="3" cy="3" r="2.3" fill="#2b93f5"/><circle cx="15" cy="3" r="2.3" fill="#2b93f5"/><path d="M2.5 4 C2 9 3 15.5 9 16 C15 15.5 16 9 15.5 4 C12 2.5 6 2.5 2.5 4 Z" fill="#2b93f5"/><path d="M4.5 10 C5 13 7 14 9 14 C11 14 13 13 13.5 10 Z" fill="#0f0f1a"/><rect x="5" y="6" width="2.2" height="2.2" fill="#0f0f1a"/><rect x="10.8" y="6" width="2.2" height="2.2" fill="#0f0f1a"/><rect x="8.2" y="4.5" width="1.6" height="3" fill="#0f0f1a"/></svg>
<div class="t" style="left:1262.5px;top:672px;font-size:12px;line-height:14px;color:#2b93f5;letter-spacing:-0.267px;">Bot Alert:</div>
<svg class="b" style="left:1313px;top:672.8px" width="13" height="13"><rect width="13" height="13" rx="1" fill="#2b93f5"/><path d="M2.9 6.8 L5.5 9.4 L10.4 3.6" stroke="#0f0f1a" stroke-width="1.4" fill="none"/></svg>
<div class="t" style="left:1330.3px;top:672px;font-size:12px;line-height:14px;color:#2b93f5;letter-spacing:-0.778px;">Trade: SELL 0.10</div>
<div class="b" style="left:1209px;top:722px;width:272px;height:19px;background:#1a1b2e;"></div>
<div class="b" style="left:1486px;top:720px;width:50px;height:24px;background:#8b5cf6;"></div>
<div class="b" style="left:1486px;top:720px;width:50px;height:1px;background:#c3a9ff;"></div>
<div class="b" style="left:1486px;top:720px;width:1px;height:24px;background:#c3a9ff;"></div>
<div class="b" style="left:1486px;top:743px;width:50px;height:1px;background:#c3a9ff;"></div>
<div class="b" style="left:1535px;top:720px;width:1px;height:24px;background:#5a3aa8;"></div>
<div class="t" style="left:1494px;top:726px;font-size:12px;line-height:14px;color:#1e1e2e;letter-spacing:-1.203px;">CLEAR</div>
<div class="b" style="left:1541px;top:720px;width:50px;height:24px;background:#2ee6de;"></div>
<div class="b" style="left:1541px;top:720px;width:50px;height:1px;background:#9ff7f2;"></div>
<div class="b" style="left:1541px;top:720px;width:1px;height:24px;background:#9ff7f2;"></div>
<div class="b" style="left:1541px;top:743px;width:50px;height:1px;background:#9ff7f2;"></div>
<div class="b" style="left:1590px;top:720px;width:1px;height:24px;background:#1a8f8a;"></div>
<div class="t" style="left:1551.5px;top:726px;font-size:12px;line-height:14px;color:#1e1e2e;letter-spacing:-1.211px;">SEND</div>
<div class="b" style="left:1210px;top:748px;width:380px;height:19px;background:#2a2b40;"></div>
<svg class="b" style="left:1381px;top:753px" width="10" height="10"><rect x="0.5" y="0.5" width="9" height="9" fill="none" stroke="#e0e0e0"/><rect x="2" y="5" width="1.5" height="4" fill="#e0e0e0"/><rect x="4.3" y="3" width="1.5" height="6" fill="#e0e0e0"/><rect x="6.6" y="2" width="1.5" height="7" fill="#e0e0e0"/></svg>
<div class="t" style="left:1394.5px;top:752px;font-size:10px;line-height:11px;color:#d2f6ea;letter-spacing:-0.643px;">Status</div>
<svg class="b" style="left:1582px;top:755px" width="18" height="18"><rect width="18" height="18" fill="#8b5cf6"/><path d="M6 14 L14 6 L14 14 Z" fill="#1e1e2e"/></svg>
<div class="b" style="left:0px;top:1160px;width:1600px;height:40px;background:#d6dbe3;"></div>
<svg class="b" style="left:16px;top:1172px" width="17" height="16"><path d="M0 2.2 L6.8 1.2 L6.8 7.4 L0 7.4 Z M7.8 1.05 L16.5 0 L16.5 7.4 L7.8 7.4 Z M0 8.4 L6.8 8.4 L6.8 14.6 L0 13.7 Z M7.8 8.4 L16.5 8.4 L16.5 16 L7.8 14.8 Z" fill="#000"/></svg>
<div class="b" style="left:49px;top:1161px;width:286px;height:38px;background:#ffffff;"></div>
<svg class="b" style="left:59px;top:1171px" width="18" height="18"><circle cx="10.5" cy="7" r="5" fill="none" stroke="#222" stroke-width="1.3"/><path d="M7 10.5 L1 16.5" stroke="#222" stroke-width="1.4"/></svg>
<div class="t" style="left:88px;top:1172px;font-size:15px;line-height:17px;color:#222;letter-spacing:-0.243px;">Type here to search</div>
<svg class="b" style="left:263px;top:1166px" width="66" height="30"><path d="M24 0 C25 7 27 10 34 12 C27 14 25 17 24 24 C23 17 21 14 14 12 C21 10 23 7 24 0 Z" fill="#f6b512"/><path d="M42 10 C42.5 14 44 15.5 48 16 C44 16.5 42.5 18 42 22 C41.5 18 40 16.5 36 16 C40 15.5 41.5 14 42 10 Z" fill="#f6b512"/><path d="M6 18 C6.3 20.5 7.3 21.5 10 22 C7.3 22.5 6.3 23.5 6 26 C5.7 23.5 4.7 22.5 2 22 C4.7 21.5 5.7 20.5 6 18 Z" fill="#2a9bf0"/><circle cx="41" cy="4" r="1.6" fill="#f05a28"/><circle cx="60" cy="21" r="1.6" fill="#6cc04a"/></svg>
<div class="b" style="left:343px;top:1198px;width:122px;height:2px;background:#0a78d4;"></div>
<svg class="b" style="left:351px;top:1171px" width="15" height="20"><path d="M1 3 L6 1 L6 4 L14 4 L14 18 L6 19 L1 17 Z" fill="#f5d77a"/><path d="M6 4 L14 4 L14 18 L6 19 Z" fill="#f8e49a"/><path d="M1 3 L6 1 L6 19 L1 17 Z" fill="#e8bf4a"/></svg>
<div class="t" style="left:376px;top:1173px;font-size:12px;line-height:14px;color:#111;letter-spacing:-0.301px;">MT5_Liqbot_A...</div>
<div class="b" style="left:474px;top:1198px;width:122px;height:2px;background:#0a78d4;"></div>
<svg class="b" style="left:479px;top:1168px" width="25" height="25"><circle cx="12" cy="12" r="11.5" fill="#db4437"/><path d="M12 12 L2 6.2 A11.5 11.5 0 0 0 6.25 22 Z" fill="#0f9d58"/><path d="M12 12 L6.25 22 A11.5 11.5 0 0 0 22 6.2 Z" fill="#f4b400"/><path d="M12 12 L22 6.2 L12 6.2 Z" fill="#f4b400"/><circle cx="12" cy="12" r="5.3" fill="#fff"/><circle cx="12" cy="12" r="4.2" fill="#4285f4"/><circle cx="18" cy="18" r="5.5" fill="#7b2fbf" stroke="#fff" stroke-width="0.8"/><text x="18" y="20" font-size="5" fill="#fff" text-anchor="middle" font-family="Liberation Sans">c</text></svg>
<div class="t" style="left:507px;top:1173px;font-size:12px;line-height:14px;color:#111;letter-spacing:-0.256px;">Secure Client ...</div>
<div class="b" style="left:605px;top:1198px;width:122px;height:2px;background:#0a78d4;"></div>
<svg class="b" style="left:610px;top:1168px" width="25" height="25"><circle cx="12" cy="12" r="11.5" fill="#db4437"/><path d="M12 12 L2 6.2 A11.5 11.5 0 0 0 6.25 22 Z" fill="#0f9d58"/><path d="M12 12 L6.25 22 A11.5 11.5 0 0 0 22 6.2 Z" fill="#f4b400"/><path d="M12 12 L22 6.2 L12 6.2 Z" fill="#f4b400"/><circle cx="12" cy="12" r="5.3" fill="#fff"/><circle cx="12" cy="12" r="4.2" fill="#4285f4"/><circle cx="18" cy="18" r="5.5" fill="#9c7e6a" stroke="#fff" stroke-width="0.8"/><text x="18" y="20" font-size="5" fill="#fff" text-anchor="middle" font-family="Liberation Sans">M</text></svg>
<div class="t" style="left:638px;top:1173px;font-size:12px;line-height:14px;color:#111;letter-spacing:-0.022px;">Watch Forgiv...</div>
<div class="b" style="left:736px;top:1198px;width:122px;height:2px;background:#0a78d4;"></div>
<svg class="b" style="left:740px;top:1168px" width="24" height="24"><rect width="24" height="24" fill="#050505"/><rect x="3" y="8" width="1.5" height="4" fill="#fff"/><rect x="5.5" y="6" width="1.5" height="6" fill="#fff"/><rect x="8" y="4" width="1.5" height="8" fill="#fff"/><text x="16" y="11.5" font-size="9" font-weight="bold" fill="#3ddc4a" text-anchor="middle" font-family="Liberation Sans">IC</text><text x="12" y="16.5" font-size="4" fill="#fff" text-anchor="middle" font-family="Liberation Sans">Markets</text><text x="12" y="21.5" font-size="4.5" font-weight="bold" fill="#3ddc4a" text-anchor="middle" font-family="Liberation Sans">Global</text></svg>
<div class="t" style="left:768px;top:1173px;font-size:12px;line-height:14px;color:#111;letter-spacing:-0.334px;">44796383: IC...</div>
<div class="b" style="left:867px;top:1198px;width:122px;height:2px;background:#0a78d4;"></div>
<svg class="b" style="left:872px;top:1168px" width="24" height="24"><rect width="24" height="24" rx="3" fill="#1a6fd8"/><rect x="4" y="5" width="4" height="14" fill="#fff"/><rect x="10" y="5" width="4" height="14" fill="#fff"/><rect x="16" y="5" width="4" height="14" fill="#fff"/></svg>
<div class="t" style="left:900px;top:1173px;font-size:12px;line-height:14px;color:#111;letter-spacing:-0.562px;">GCZ5.COMEX...</div>
<div class="b" style="left:998px;top:1198px;width:122px;height:2px;background:#0a78d4;"></div>
<svg class="b" style="left:1003px;top:1168px" width="24" height="24"><rect width="24" height="24" fill="#050505"/><rect x="3" y="8" width="1.5" height="4" fill="#fff"/><rect x="5.5" y="6" width="1.5" height="6" fill="#fff"/><rect x="8" y="4" width="1.5" height="8" fill="#fff"/><text x="16" y="11.5" font-size="9" font-weight="bold" fill="#3ddc4a" text-anchor="middle" font-family="Liberation Sans">IC</text><text x="12" y="16.5" font-size="4" fill="#fff" text-anchor="middle" font-family="Liberation Sans">Markets</text><text x="12" y="21.5" font-size="4.5" font-weight="bold" fill="#3ddc4a" text-anchor="middle" font-family="Liberation Sans">Global</text></svg>
<div class="t" style="left:1031px;top:1173px;font-size:12px;line-height:14px;color:#111;letter-spacing:-0.438px;">52104897 - IC...</div>
<div class="b" style="left:1125px;top:1160px;width:129px;height:38px;background:#f0f2f6;"></div>
<div class="b" style="left:1125px;top:1198px;width:129px;height:2px;background:#0a78d4;"></div>
<svg class="b" style="left:1138px;top:1167px" width="16" height="25"><path d="M13 1 C5 4 2 11 3 19 L5 18 C8 13 12 8 13 1 Z" fill="#4a78c8" stroke="#203050" stroke-width="0.8"/><path d="M3 19 L2 24" stroke="#222" stroke-width="1.2"/></svg>
<div class="t" style="left:1162px;top:1173px;font-size:12px;line-height:14px;color:#111;letter-spacing:-0.136px;">MT5 Liqbot Pr...</div>
<div class="b" style="left:1259px;top:1198px;width:121px;height:2px;background:#0a78d4;"></div>
<svg class="b" style="left:1265px;top:1169px" width="22" height="22"><circle cx="11" cy="11" r="11" fill="#2a9ed8"/><path d="M5 10.5 L16.5 6 L14.5 16 L11 13 L9 15 L9 12 L14 7.5 L8 11.5 Z" fill="#fff"/></svg>
<div class="t" style="left:1292px;top:1173px;font-size:12px;line-height:14px;color:#111;letter-spacing:-0.02px;">Binary option ...</div>
<svg class="b" style="left:1393px;top:1175px" width="13" height="8"><path d="M1 7 L6.5 1.5 L12 7" stroke="#111" stroke-width="1.2" fill="none"/></svg>
<svg class="b" style="left:1417px;top:1172px" width="14" height="16"><rect x="1" y="4" width="8" height="8" rx="1" fill="none" stroke="#111" stroke-width="1.1"/><path d="M9 6.5 L13 4.5 L13 11.5 L9 9.5" fill="none" stroke="#111" stroke-width="1.1"/><path d="M2 1.5 C4 0.5 7 0.5 9 1.5 M2 14.5 C4 15.5 7 15.5 9 14.5" stroke="#111" stroke-width="1" fill="none"/></svg>
<svg class="b" style="left:1438px;top:1172px" width="18" height="16"><path d="M1 5.5 L4 5.5 L8 2 L8 14 L4 10.5 L1 10.5 Z" fill="none" stroke="#111" stroke-width="1.1"/><path d="M10.5 5.5 C11.5 6.5 11.5 9.5 10.5 10.5 M12.5 3.5 C14.5 5.5 14.5 10.5 12.5 12.5 M14.5 1.5 C17.5 4.5 17.5 11.5 14.5 14.5" stroke="#111" stroke-width="1" fill="none"/></svg>
<svg class="b" style="left:1465px;top:1172px" width="15" height="15"><path d="M1 14 C1 7 7 1 14 1 M4 14 C4 9 9 4 14 4 M7 14 C7 10.5 10.5 7 14 7" stroke="#111" stroke-width="1.1" fill="none"/><circle cx="12" cy="12" r="1.6" fill="#111"/></svg>
<div class="t" style="left:1490px;top:1165px;font-size:12px;line-height:14px;color:#111;letter-spacing:-0.211px;">10:44 AM</div>
<div class="t" style="left:1492px;top:1181px;font-size:12px;line-height:14px;color:#111;letter-spacing:-0.086px;">9/5/2025</div>
<svg class="b" style="left:1559px;top:1171px" width="18" height="18"><path d="M0 0 L18 0 L18 13 L11 13 L8.5 17 L6 13 L0 13 Z" fill="#111"/><rect x="3" y="3.5" width="12" height="1.2" fill="#d6dbe3"/><rect x="3" y="6.5" width="12" height="1.2" fill="#d6dbe3"/><rect x="3" y="9.5" width="8" height="1.2" fill="#d6dbe3"/></svg>
<div class="b" style="left:1595px;top:1160px;width:1px;height:40px;background:#a8adb5;"></div>
</body></html>
